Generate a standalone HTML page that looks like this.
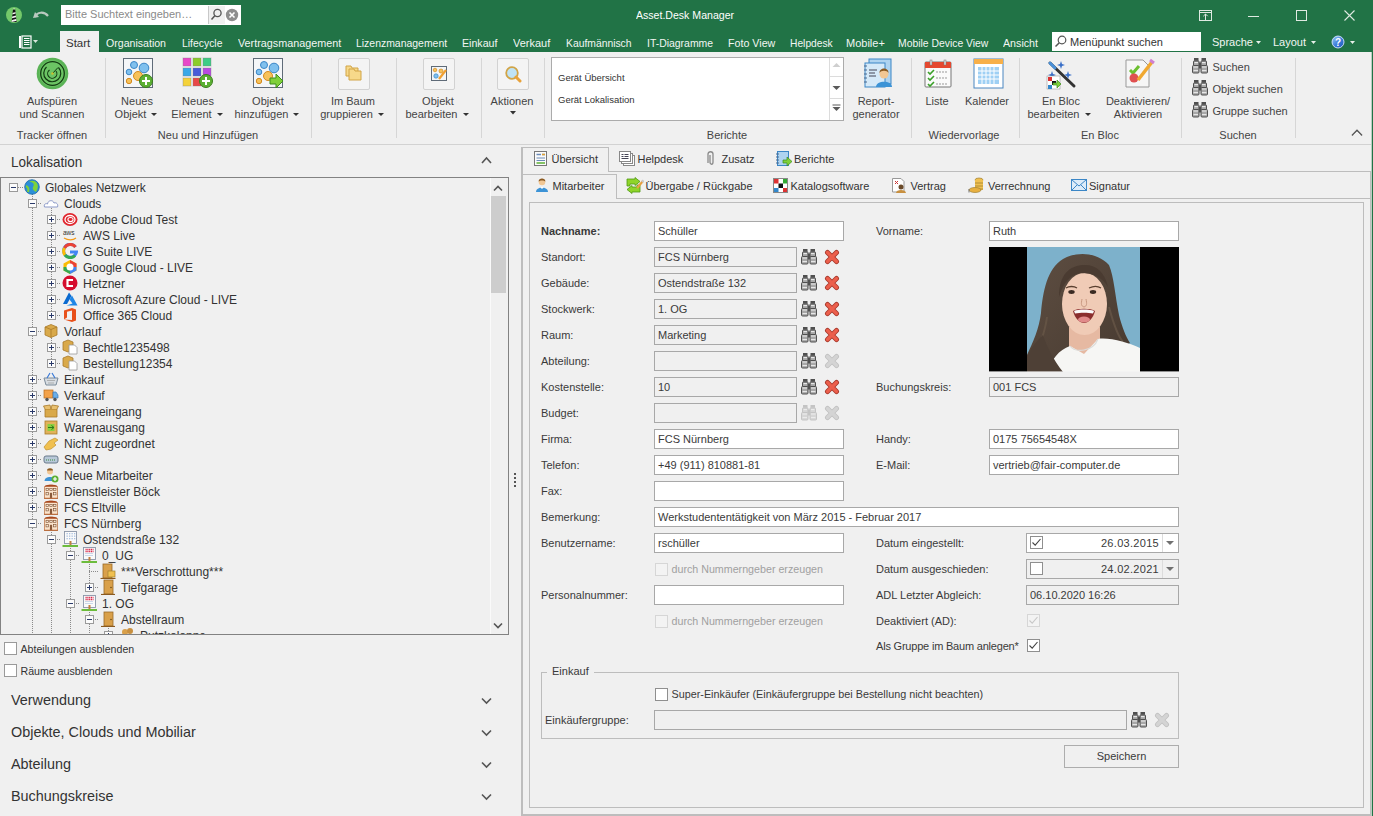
<!DOCTYPE html><html><head><meta charset="utf-8"><style>
html,body{margin:0;padding:0}
body{width:1373px;height:816px;position:relative;overflow:hidden;background:#f0f0f0;font-family:"Liberation Sans",sans-serif}
.a{position:absolute}
.t{position:absolute;white-space:nowrap}
</style></head><body>
<div class="a" style="left:0px;top:0px;width:1373px;height:52px;background:#217346"></div><svg class="a" style="left:5px;top:6px;" width="18" height="18" viewBox="0 0 18 18"><defs><clipPath id="lh"><path d="M8 3.2 L10.2 3.2 L11.6 16 L6.6 16 Z"/></clipPath></defs><circle cx="9" cy="9" r="8" fill="#74c96a"/><g clip-path="url(#lh)"><rect x="5" y="2" width="8" height="15" fill="#111"/><path d="M5 7.5 L13 5.5 L13 7 L5 9Z M5 11 L13 9 L13 10.8 L5 12.8Z M5 14.6 L13 12.6 L13 14.4 L5 16.4Z" fill="#f4f4f4"/></g><path d="M8.3 2 L9.9 2 L10.2 3.5 L8 3.5Z" fill="#a8d8a0"/></svg><svg class="a" style="left:32px;top:9px;" width="18" height="12" viewBox="0 0 18 12"><path d="M3 8 C5 3, 12 2, 16 7" stroke="#b9c9bf" stroke-width="2.2" fill="none"/><path d="M1 9 L3 3 L7 8 Z" fill="#b9c9bf"/></svg><div class="a" style="left:61px;top:5px;width:180px;height:20px;background:#fff"></div><div class="a" style="left:208px;top:6px;width:16px;height:18px;background:#f0f0f0;border-left:1px solid #c8c8c8"></div><div class="t" style="left:65px;top:9px;font-size:11px;line-height:11px;color:#8a8a8a;font-weight:400;">Bitte Suchtext eingeben…</div><svg class="a" style="left:210px;top:8px;" width="12" height="14" viewBox="0 0 12 14"><circle cx="7.5" cy="5" r="3.6" stroke="#555" stroke-width="1.3" fill="none"/><path d="M5 7.6 L1.5 11.5" stroke="#555" stroke-width="1.5"/></svg><svg class="a" style="left:225px;top:8px;" width="14" height="14" viewBox="0 0 14 14"><circle cx="7" cy="7" r="6.2" fill="#8e8e8e"/><path d="M4.5 4.5 L9.5 9.5 M9.5 4.5 L4.5 9.5" stroke="#fff" stroke-width="1.6"/></svg><div class="t" style="left:636px;top:10px;font-size:11px;line-height:11px;color:#ffffff;font-weight:400;transform:scaleX(0.96);transform-origin:0 0">Asset.Desk Manager</div><svg class="a" style="left:1198px;top:9px;" width="16" height="13" viewBox="0 0 16 13"><rect x="1.5" y="1.5" width="12" height="10" fill="none" stroke="#dfeae2" stroke-width="1"/><path d="M1.5 3.5 H13.5 M7.5 5 V11.5 M5.3 7.2 L7.5 5 L9.7 7.2" stroke="#dfeae2" stroke-width="1" fill="none"/></svg><div class="a" style="left:1248px;top:16px;width:11px;height:1px;background:#dfeae2"></div><div class="a" style="left:1296px;top:10px;width:11px;height:11px;border:1px solid #dfeae2;box-sizing:border-box"></div><svg class="a" style="left:1343px;top:9px;" width="13" height="13" viewBox="0 0 13 13"><path d="M1.5 1.5 L11.5 11.5 M11.5 1.5 L1.5 11.5" stroke="#dfeae2" stroke-width="1.1"/></svg><svg class="a" style="left:18px;top:35px;" width="14" height="14" viewBox="0 0 14 14"><rect x="1" y="1" width="2" height="12" fill="#fff"/><rect x="4" y="1" width="9" height="12" fill="none" stroke="#fff" stroke-width="1.2"/><path d="M6 3.5 H11.5 M6 5.5 H11.5 M6 7.5 H11.5 M6 9.5 H11.5" stroke="#fff" stroke-width="1"/></svg><svg class="a" style="left:33px;top:40px;" width="5" height="3" viewBox="0 0 5 3"><path d="M0 0 L5 0 L2.5 3Z" fill="#d8e6dc"/></svg><div class="a" style="left:60px;top:31px;width:39px;height:21px;background:#f0f0f0"></div><div class="t" style="left:66px;top:38px;font-size:11.5px;line-height:11.5px;color:#333;font-weight:400;">Start</div><div class="t" style="left:106px;top:38px;font-size:11px;line-height:11px;color:#f2f6f3;font-weight:400;transform:scaleX(0.962);transform-origin:0 0">Organisation</div><div class="t" style="left:181.5px;top:38px;font-size:11px;line-height:11px;color:#f2f6f3;font-weight:400;transform:scaleX(0.944);transform-origin:0 0">Lifecycle</div><div class="t" style="left:237.5px;top:38px;font-size:11px;line-height:11px;color:#f2f6f3;font-weight:400;transform:scaleX(0.981);transform-origin:0 0">Vertragsmanagement</div><div class="t" style="left:355.5px;top:38px;font-size:11px;line-height:11px;color:#f2f6f3;font-weight:400;transform:scaleX(0.949);transform-origin:0 0">Lizenzmanagement</div><div class="t" style="left:461.5px;top:38px;font-size:11px;line-height:11px;color:#f2f6f3;font-weight:400;transform:scaleX(0.965);transform-origin:0 0">Einkauf</div><div class="t" style="left:512.5px;top:38px;font-size:11px;line-height:11px;color:#f2f6f3;font-weight:400;transform:scaleX(0.997);transform-origin:0 0">Verkauf</div><div class="t" style="left:565.5px;top:38px;font-size:11px;line-height:11px;color:#f2f6f3;font-weight:400;transform:scaleX(0.940);transform-origin:0 0">Kaufmännisch</div><div class="t" style="left:646.5px;top:38px;font-size:11px;line-height:11px;color:#f2f6f3;font-weight:400;transform:scaleX(0.948);transform-origin:0 0">IT-Diagramme</div><div class="t" style="left:728px;top:38px;font-size:11px;line-height:11px;color:#f2f6f3;font-weight:400;transform:scaleX(0.971);transform-origin:0 0">Foto View</div><div class="t" style="left:789.5px;top:38px;font-size:11px;line-height:11px;color:#f2f6f3;font-weight:400;transform:scaleX(0.932);transform-origin:0 0">Helpdesk</div><div class="t" style="left:846px;top:38px;font-size:11px;line-height:11px;color:#f2f6f3;font-weight:400;transform:scaleX(1.000);transform-origin:0 0">Mobile+</div><div class="t" style="left:898px;top:38px;font-size:11px;line-height:11px;color:#f2f6f3;font-weight:400;transform:scaleX(0.943);transform-origin:0 0">Mobile Device View</div><div class="t" style="left:1003px;top:38px;font-size:11px;line-height:11px;color:#f2f6f3;font-weight:400;transform:scaleX(0.970);transform-origin:0 0">Ansicht</div><div class="a" style="left:1052px;top:32px;width:149px;height:19px;background:#fff"></div><svg class="a" style="left:1054px;top:35px;" width="13" height="13" viewBox="0 0 13 13"><circle cx="8" cy="5" r="3.8" stroke="#555" stroke-width="1.2" fill="none"/><path d="M5.3 7.7 L1.5 11.5" stroke="#555" stroke-width="1.5"/></svg><div class="t" style="left:1070px;top:37px;font-size:11px;line-height:11px;color:#333;font-weight:400;">Menüpunkt suchen</div><div class="t" style="left:1212px;top:37px;font-size:11px;line-height:11px;color:#f2f6f3;font-weight:400;">Sprache</div><svg class="a" style="left:1256px;top:41px;" width="5" height="3" viewBox="0 0 5 3"><path d="M0 0 L5 0 L2.5 3Z" fill="#e8f0ea"/></svg><div class="t" style="left:1273px;top:37px;font-size:11px;line-height:11px;color:#f2f6f3;font-weight:400;">Layout</div><svg class="a" style="left:1311px;top:41px;" width="5" height="3" viewBox="0 0 5 3"><path d="M0 0 L5 0 L2.5 3Z" fill="#e8f0ea"/></svg><svg class="a" style="left:1330px;top:34px;" width="16" height="16" viewBox="0 0 16 16"><defs><linearGradient id="hq" x1="0" y1="0" x2="1" y2="1"><stop offset="0" stop-color="#9fd0f8"/><stop offset=".55" stop-color="#3a7ad8"/><stop offset="1" stop-color="#1f55b8"/></linearGradient></defs><circle cx="8" cy="8" r="6.6" fill="#0d4a50" opacity=".5"/><circle cx="8" cy="8" r="6" fill="url(#hq)" stroke="#d8ecff" stroke-width=".9"/><text x="8" y="11.8" font-family="Liberation Sans" font-weight="700" font-size="10" fill="#fff" text-anchor="middle">?</text></svg><svg class="a" style="left:1350px;top:41px;" width="5" height="3" viewBox="0 0 5 3"><path d="M0 0 L5 0 L2.5 3Z" fill="#e8f0ea"/></svg><div class="a" style="left:0px;top:52px;width:1373px;height:92px;background:#f0f0f0"></div><div class="a" style="left:0px;top:144px;width:1371px;height:1px;background:#d2d2d2"></div><div class="a" style="left:1371px;top:52px;width:1px;height:764px;background:#b9cfc1"></div><div class="a" style="left:1372px;top:52px;width:1px;height:764px;background:#217346"></div><div class="a" style="left:105px;top:58px;width:1px;height:80px;background:#d6d6d6"></div><div class="a" style="left:311px;top:58px;width:1px;height:80px;background:#d6d6d6"></div><div class="a" style="left:396px;top:58px;width:1px;height:80px;background:#d6d6d6"></div><div class="a" style="left:481px;top:58px;width:1px;height:80px;background:#d6d6d6"></div><div class="a" style="left:544px;top:58px;width:1px;height:80px;background:#d6d6d6"></div><div class="a" style="left:911px;top:58px;width:1px;height:80px;background:#d6d6d6"></div><div class="a" style="left:1019px;top:58px;width:1px;height:80px;background:#d6d6d6"></div><div class="a" style="left:1181px;top:58px;width:1px;height:80px;background:#d6d6d6"></div><div class="a" style="left:1295px;top:58px;width:1px;height:80px;background:#d6d6d6"></div><div class="t" style="left:-48px;width:200px;text-align:center;top:130px;font-size:11px;line-height:11px;color:#444">Tracker öffnen</div><div class="t" style="left:108px;width:200px;text-align:center;top:130px;font-size:11px;line-height:11px;color:#444">Neu und Hinzufügen</div><div class="t" style="left:627px;width:200px;text-align:center;top:130px;font-size:11px;line-height:11px;color:#444">Berichte</div><div class="t" style="left:864px;width:200px;text-align:center;top:130px;font-size:11px;line-height:11px;color:#444">Wiedervorlage</div><div class="t" style="left:1000px;width:200px;text-align:center;top:130px;font-size:11px;line-height:11px;color:#444">En Bloc</div><div class="t" style="left:1138px;width:200px;text-align:center;top:130px;font-size:11px;line-height:11px;color:#444">Suchen</div><svg class="a" style="left:36px;top:57px;" width="33" height="33" viewBox="0 0 33 33"><circle cx="16.5" cy="16.5" r="15.8" fill="#5ab356"/><circle cx="16.5" cy="16.5" r="13.2" fill="#6cc464"/><circle cx="16.5" cy="16.5" r="11.8" fill="none" stroke="#123a12" stroke-width="1.3"/><path d="M10.5 10 A8.5 8.5 0 1 0 22.5 10.5" fill="none" stroke="#123a12" stroke-width="1.2"/><path d="M13.5 13 A4.6 4.6 0 1 0 20 14" fill="none" stroke="#123a12" stroke-width="1.1"/><path d="M16.5 16.5 L22 10.5" stroke="#123a12" stroke-width="1"/><circle cx="16.5" cy="16.5" r="1.3" fill="#c8c030"/></svg><div class="t" style="left:-48px;width:200px;text-align:center;top:96px;font-size:11px;line-height:11px;color:#444">Aufspüren</div><div class="t" style="left:-48px;width:200px;text-align:center;top:109px;font-size:11px;line-height:11px;color:#444">und Scannen</div><svg class="a" style="left:123px;top:58px;" width="30" height="31" viewBox="0 0 30 31"><rect x="0.5" y="0.5" width="29" height="29" fill="#f4f6f8" stroke="#5f6b78"/><circle cx="11" cy="7" r="3.5" fill="#7fc0ee" stroke="#3b86c6"/><circle cx="21" cy="10" r="4.8" fill="#7fc0ee" stroke="#3b86c6"/><circle cx="6" cy="14" r="2.8" fill="#7fc0ee" stroke="#3b86c6"/><circle cx="15" cy="18" r="4.5" fill="#f7c25a" stroke="#d48a1e"/><circle cx="6" cy="23" r="2.7" fill="#f7c25a" stroke="#d48a1e"/><circle cx="23" cy="23" r="6.5" fill="#5cb033" stroke="#3a7d1d"/><path d="M23 19 V27 M19 23 H27" stroke="#fff" stroke-width="2"/></svg><div class="t" style="left:37px;width:200px;text-align:center;top:96px;font-size:11px;line-height:11px;color:#444">Neues</div><div class="t" style="left:36px;width:200px;text-align:center;top:109px;font-size:11px;line-height:11px;color:#444">Objekt<span style='display:inline-block;width:0;height:0;border-left:3px solid transparent;border-right:3px solid transparent;border-top:3px solid #333;margin-left:5px;vertical-align:2px'></span></div><svg class="a" style="left:182px;top:57px;" width="32" height="32" viewBox="0 0 32 32"><rect x="1" y="1" width="8" height="8" fill="#e848c8" stroke="#777" stroke-opacity="0.35"/><rect x="11" y="1" width="8" height="8" fill="#8ccc2a" stroke="#777" stroke-opacity="0.35"/><rect x="21" y="1" width="8" height="8" fill="#3ecc86" stroke="#777" stroke-opacity="0.35"/><rect x="1" y="11" width="8" height="8" fill="#3aa8e8" stroke="#777" stroke-opacity="0.35"/><rect x="11" y="11" width="8" height="8" fill="#4a5ad8" stroke="#777" stroke-opacity="0.35"/><rect x="21" y="11" width="8" height="8" fill="#b84ae0" stroke="#777" stroke-opacity="0.35"/><rect x="1" y="21" width="8" height="8" fill="#f4d23a" stroke="#777" stroke-opacity="0.35"/><rect x="11" y="21" width="8" height="8" fill="#e84848" stroke="#777" stroke-opacity="0.35"/><circle cx="24" cy="24" r="6.5" fill="#5cb033" stroke="#3a7d1d"/><path d="M24 20 V28 M20 24 H28" stroke="#fff" stroke-width="2"/></svg><div class="t" style="left:98px;width:200px;text-align:center;top:96px;font-size:11px;line-height:11px;color:#444">Neues</div><div class="t" style="left:97px;width:200px;text-align:center;top:109px;font-size:11px;line-height:11px;color:#444">Element<span style='display:inline-block;width:0;height:0;border-left:3px solid transparent;border-right:3px solid transparent;border-top:3px solid #333;margin-left:5px;vertical-align:2px'></span></div><svg class="a" style="left:253px;top:58px;" width="31" height="31" viewBox="0 0 31 31"><rect x="0.5" y="0.5" width="29" height="29" fill="#f4f6f8" stroke="#5f6b78"/><circle cx="11" cy="7" r="3.5" fill="#7fc0ee" stroke="#3b86c6"/><circle cx="21" cy="10" r="4.8" fill="#7fc0ee" stroke="#3b86c6"/><circle cx="6" cy="14" r="2.8" fill="#7fc0ee" stroke="#3b86c6"/><circle cx="15" cy="18" r="4.5" fill="#f7c25a" stroke="#d48a1e"/><circle cx="6" cy="23" r="2.7" fill="#f7c25a" stroke="#d48a1e"/><path d="M17 20 H23 V16 L30 23 L23 30 V26 H17Z" fill="#7fd03a" stroke="#3e8c1c"/></svg><div class="t" style="left:168px;width:200px;text-align:center;top:96px;font-size:11px;line-height:11px;color:#444">Objekt</div><div class="t" style="left:167px;width:200px;text-align:center;top:109px;font-size:11px;line-height:11px;color:#444">hinzufügen<span style='display:inline-block;width:0;height:0;border-left:3px solid transparent;border-right:3px solid transparent;border-top:3px solid #333;margin-left:5px;vertical-align:2px'></span></div><div class="a" style="left:338px;top:58px;width:32px;height:32px;background:#f4f4f4;border:1px solid #d2d2d2;border-radius:2px;box-sizing:border-box"></div><svg class="a" style="left:345px;top:65px;" width="18" height="17" viewBox="0 0 18 17"><path d="M1 1 H6 L7 3 H13 V11 H1Z" fill="#f7d98a" stroke="#d1a447"/><path d="M4 4 H9 L10 6 H16 V15 H4Z" fill="#f7d98a" stroke="#d1a447"/></svg><div class="t" style="left:253px;width:200px;text-align:center;top:96px;font-size:11px;line-height:11px;color:#444">Im Baum</div><div class="t" style="left:252px;width:200px;text-align:center;top:109px;font-size:11px;line-height:11px;color:#444">gruppieren<span style='display:inline-block;width:0;height:0;border-left:3px solid transparent;border-right:3px solid transparent;border-top:3px solid #333;margin-left:5px;vertical-align:2px'></span></div><div class="a" style="left:423px;top:58px;width:32px;height:32px;background:#f4f4f4;border:1px solid #d2d2d2;border-radius:2px;box-sizing:border-box"></div><svg class="a" style="left:430px;top:65px;" width="18" height="17" viewBox="0 0 18 17"><rect x="1.5" y="1.5" width="15" height="14" fill="#f3f6f8" stroke="#5f6b78"/><circle cx="5" cy="5" r="1.8" fill="#f7c25a" stroke="#d48a1e" stroke-width=".7"/><circle cx="11" cy="6" r="2" fill="#f7c25a" stroke="#d48a1e" stroke-width=".7"/><circle cx="6" cy="11" r="2.2" fill="#7fc0ee" stroke="#3b86c6" stroke-width=".7"/><path d="M9 14 L16 5" stroke="#f0a030" stroke-width="2.2"/></svg><div class="t" style="left:338px;width:200px;text-align:center;top:96px;font-size:11px;line-height:11px;color:#444">Objekt</div><div class="t" style="left:337px;width:200px;text-align:center;top:109px;font-size:11px;line-height:11px;color:#444">bearbeiten<span style='display:inline-block;width:0;height:0;border-left:3px solid transparent;border-right:3px solid transparent;border-top:3px solid #333;margin-left:5px;vertical-align:2px'></span></div><div class="a" style="left:497px;top:58px;width:32px;height:32px;background:#f4f4f4;border:1px solid #d2d2d2;border-radius:2px;box-sizing:border-box"></div><svg class="a" style="left:504px;top:65px;" width="18" height="18" viewBox="0 0 18 18"><circle cx="8" cy="8" r="5.8" fill="#bfe3f5" stroke="#d1a447" stroke-width="1.8"/><path d="M12 12 L16 16" stroke="#e8a23a" stroke-width="3" stroke-linecap="round"/></svg><div class="t" style="left:412px;width:200px;text-align:center;top:96px;font-size:11px;line-height:11px;color:#444">Aktionen</div><svg class="a" style="left:510px;top:111px;" width="6" height="4" viewBox="0 0 6 4"><path d="M0 0 L6 0 L3 3.5Z" fill="#333"/></svg><div class="a" style="left:551px;top:57px;width:293px;height:64px;background:#fff;border:1px solid #ababab;box-sizing:border-box"></div><div class="a" style="left:829px;top:58px;width:1px;height:62px;background:#dcdcdc"></div><div class="a" style="left:830px;top:76px;width:13px;height:1px;background:#dcdcdc"></div><div class="a" style="left:830px;top:98px;width:13px;height:1px;background:#dcdcdc"></div><svg class="a" style="left:832px;top:62px;" width="9" height="6" viewBox="0 0 9 6"><path d="M0.5 5 L4.5 1 L8.5 5Z" fill="#cfcfcf"/></svg><svg class="a" style="left:832px;top:85px;" width="9" height="6" viewBox="0 0 9 6"><path d="M0.5 1 L8.5 1 L4.5 5Z" fill="#5a5a5a"/></svg><svg class="a" style="left:832px;top:104px;" width="9" height="8" viewBox="0 0 9 8"><path d="M0.5 1 H8.5" stroke="#5a5a5a"/><path d="M0.5 3 L8.5 3 L4.5 7Z" fill="#5a5a5a"/></svg><div class="t" style="left:558px;top:73px;font-size:9.5px;line-height:9.5px;color:#333;font-weight:400;">Gerät Übersicht</div><div class="t" style="left:558px;top:95px;font-size:9.5px;line-height:9.5px;color:#333;font-weight:400;">Gerät Lokalisation</div><svg class="a" style="left:863px;top:58px;" width="30" height="31" viewBox="0 0 30 31"><rect x="6" y="1" width="22" height="25" fill="#aed3f0" stroke="#3b86c6"/><rect x="2" y="5" width="20" height="24" fill="#d5e9f8" stroke="#3b86c6"/><path d="M1 8 h3 M1 12 h3 M1 16 h3 M1 20 h3 M1 24 h3" stroke="#4a6a90" stroke-width="1.2"/><path d="M6 12 h8 M6 15 h6 M6 18 h7" stroke="#445" stroke-width="1"/><circle cx="21" cy="16" r="4.5" fill="#f2c794"/><path d="M16.5 15 C16 9, 26 9, 25.5 15 C24 12, 18 12, 16.5 15Z" fill="#8a5a22"/><path d="M13 29 C13 22, 29 22, 29 29Z" fill="#3c93d6"/></svg><div class="t" style="left:776px;width:200px;text-align:center;top:96px;font-size:11px;line-height:11px;color:#444">Report-</div><div class="t" style="left:776px;width:200px;text-align:center;top:109px;font-size:11px;line-height:11px;color:#444">generator</div><svg class="a" style="left:924px;top:59px;" width="28" height="30" viewBox="0 0 28 30"><rect x="1" y="3" width="26" height="25" rx="1" fill="#fafafa" stroke="#777"/><rect x="1" y="3" width="26" height="6" fill="#e5482f"/><rect x="6" y="1" width="2" height="5" fill="#ddd" stroke="#777" stroke-width=".5"/><rect x="20" y="1" width="2" height="5" fill="#ddd" stroke="#777" stroke-width=".5"/><path d="M4 13 L6 15 L10 11 M4 19 L6 21 L10 17 M4 25 L6 27 L10 23" stroke="#3aa028" stroke-width="1.6" fill="none"/><path d="M12 13 h11 M12 19 h11 M12 25 h11" stroke="#999" stroke-dasharray="2 1"/></svg><div class="t" style="left:837px;width:200px;text-align:center;top:96px;font-size:11px;line-height:11px;color:#444">Liste</div><svg class="a" style="left:973px;top:58px;" width="31" height="31" viewBox="0 0 31 31"><rect x="1" y="1" width="29" height="29" fill="#fff" stroke="#4a86c0"/><rect x="1" y="1" width="29" height="5" fill="#f7b04a"/><rect x="5" y="9" width="21" height="17" fill="#9fd0f4"/><path d="M5 13 h21 M5 17 h21 M5 21 h21 M9 9 v17 M13 9 v17 M17 9 v17 M21 9 v17" stroke="#fff" stroke-width="1"/></svg><div class="t" style="left:887px;width:200px;text-align:center;top:96px;font-size:11px;line-height:11px;color:#444">Kalender</div><svg class="a" style="left:1046px;top:59px;" width="32" height="31" viewBox="0 0 32 31"><path d="M4 4 L28 27" stroke="#333" stroke-width="3" stroke-linecap="round"/><path d="M4 4 L9 9" stroke="#4a90d8" stroke-width="3" stroke-linecap="round"/><path d="M15 2 l1 3 3 1 -3 1 -1 3 -1 -3 -3 -1 3 -1z M22 12 l1 3 3 1 -3 1 -1 3 -1 -3 -3 -1 3 -1z M6 12 l1 3 3 1 -3 1 -1 3 -1 -3 -3 -1 3 -1z" fill="#3a70c8"/><rect x="1" y="17" width="13" height="13" fill="#fff" stroke="#888" stroke-width=".5"/><rect x="2" y="18" width="4" height="4" fill="#d33"/><rect x="6" y="22" width="4" height="4" fill="#111"/><rect x="2" y="26" width="4" height="4" fill="#38c"/><path d="M7 24 h4 v-3 l4 4 -4 4 v-3 h-4z" fill="#7fd03a" stroke="#3e8c1c" stroke-width=".7"/></svg><div class="t" style="left:961px;width:200px;text-align:center;top:96px;font-size:11px;line-height:11px;color:#444">En Bloc</div><div class="t" style="left:959px;width:200px;text-align:center;top:109px;font-size:11px;line-height:11px;color:#444">bearbeiten<span style='display:inline-block;width:0;height:0;border-left:3px solid transparent;border-right:3px solid transparent;border-top:3px solid #333;margin-left:5px;vertical-align:2px'></span></div><svg class="a" style="left:1124px;top:58px;" width="31" height="31" viewBox="0 0 31 31"><path d="M2 2 H19 L25 8 V29 H2Z" fill="#f6f6f6" stroke="#999"/><path d="M6 12 L9 15 L15 8" stroke="#6cc030" stroke-width="3" fill="none"/><circle cx="10" cy="20" r="4.5" fill="#e05050"/><path d="M14 22 L28 4" stroke="#f0a830" stroke-width="3.5"/><path d="M26 2 L30 5" stroke="#d080d0" stroke-width="3"/></svg><div class="t" style="left:1038px;width:200px;text-align:center;top:96px;font-size:11px;line-height:11px;color:#444">Deaktivieren/</div><div class="t" style="left:1038px;width:200px;text-align:center;top:109px;font-size:11px;line-height:11px;color:#444">Aktivieren</div><svg class="a" style="left:1192px;top:58px;" width="16" height="16" viewBox="0 0 16 16"><rect x="7" y="4.5" width="2" height="6" fill="#505050"/><rect x="0.5" y="7.5" width="6.5" height="7.5" rx="1" fill="#a8a8a8" stroke="#505050"/><rect x="1.5" y="3" width="5.5" height="4.5" rx=".5" fill="#a8a8a8" stroke="#505050"/><rect x="2" y="0" width="4.5" height="2.8" fill="#505050"/><rect x="9" y="7.5" width="6.5" height="7.5" rx="1" fill="#a8a8a8" stroke="#505050"/><rect x="9" y="3" width="5.5" height="4.5" rx=".5" fill="#a8a8a8" stroke="#505050"/><rect x="9.5" y="0" width="4.5" height="2.8" fill="#505050"/><path d="M2.5 4.6 H6 M10 4.6 H13.5 M1.5 9 H6 M10 9 H14.5 M1.5 12.6 H6 M10 12.6 H14.5" stroke="#eeeeee" stroke-width="1"/></svg><div class="t" style="left:1212.5px;top:62px;font-size:11px;line-height:11px;color:#444;font-weight:400;">Suchen</div><svg class="a" style="left:1192px;top:80px;" width="16" height="16" viewBox="0 0 16 16"><rect x="7" y="4.5" width="2" height="6" fill="#505050"/><rect x="0.5" y="7.5" width="6.5" height="7.5" rx="1" fill="#a8a8a8" stroke="#505050"/><rect x="1.5" y="3" width="5.5" height="4.5" rx=".5" fill="#a8a8a8" stroke="#505050"/><rect x="2" y="0" width="4.5" height="2.8" fill="#505050"/><rect x="9" y="7.5" width="6.5" height="7.5" rx="1" fill="#a8a8a8" stroke="#505050"/><rect x="9" y="3" width="5.5" height="4.5" rx=".5" fill="#a8a8a8" stroke="#505050"/><rect x="9.5" y="0" width="4.5" height="2.8" fill="#505050"/><path d="M2.5 4.6 H6 M10 4.6 H13.5 M1.5 9 H6 M10 9 H14.5 M1.5 12.6 H6 M10 12.6 H14.5" stroke="#eeeeee" stroke-width="1"/></svg><div class="t" style="left:1212.5px;top:84px;font-size:11px;line-height:11px;color:#444;font-weight:400;">Objekt suchen</div><svg class="a" style="left:1192px;top:102px;" width="16" height="16" viewBox="0 0 16 16"><rect x="7" y="4.5" width="2" height="6" fill="#505050"/><rect x="0.5" y="7.5" width="6.5" height="7.5" rx="1" fill="#a8a8a8" stroke="#505050"/><rect x="1.5" y="3" width="5.5" height="4.5" rx=".5" fill="#a8a8a8" stroke="#505050"/><rect x="2" y="0" width="4.5" height="2.8" fill="#505050"/><rect x="9" y="7.5" width="6.5" height="7.5" rx="1" fill="#a8a8a8" stroke="#505050"/><rect x="9" y="3" width="5.5" height="4.5" rx=".5" fill="#a8a8a8" stroke="#505050"/><rect x="9.5" y="0" width="4.5" height="2.8" fill="#505050"/><path d="M2.5 4.6 H6 M10 4.6 H13.5 M1.5 9 H6 M10 9 H14.5 M1.5 12.6 H6 M10 12.6 H14.5" stroke="#eeeeee" stroke-width="1"/></svg><div class="t" style="left:1212.5px;top:106px;font-size:11px;line-height:11px;color:#444;font-weight:400;">Gruppe suchen</div><svg class="a" style="left:1351px;top:128px;" width="12" height="9" viewBox="0 0 12 9"><path d="M1 7.5 L6 2.5 L11 7.5" stroke="#555" stroke-width="1.6" fill="none"/><path d="M2.3 7.5 L6 3.8 L9.7 7.5" stroke="#fff" stroke-width=".8" fill="none"/></svg><div class="t" style="left:11px;top:154px;font-size:15px;line-height:15px;color:#333;font-weight:400;transform:scaleX(0.9);transform-origin:0 0">Lokalisation</div><svg class="a" style="left:481px;top:156px;" width="11" height="8" viewBox="0 0 11 8"><path d="M1 7 L5.5 2 L10 7" stroke="#555" stroke-width="1.6" fill="none"/></svg><div class="a" style="left:0px;top:177px;width:509px;height:458px;background:#f0f0f0;border:1px solid #828282;border-right:1px solid #828282;box-sizing:border-box"></div><div class="a" style="left:490px;top:178px;width:18px;height:456px;background:#f0f0f0;border-left:1px solid #fafafa;box-sizing:border-box"></div><div class="a" style="left:491px;top:196px;width:15px;height:97px;background:#cdcdcd"></div><svg class="a" style="left:493px;top:184px;" width="10" height="8" viewBox="0 0 10 8"><path d="M1 6.5 L5 2.5 L9 6.5" stroke="#555" stroke-width="1.6" fill="none"/></svg><svg class="a" style="left:493px;top:622px;" width="10" height="8" viewBox="0 0 10 8"><path d="M1 1.5 L5 5.5 L9 1.5" stroke="#555" stroke-width="1.6" fill="none"/></svg><div class="t" style="left:20.5px;top:644px;font-size:10.6px;line-height:10.6px;color:#333;font-weight:400;">Abteilungen ausblenden</div><div class="t" style="left:20.5px;top:666px;font-size:10.6px;line-height:10.6px;color:#333;font-weight:400;">Räume ausblenden</div><div class="a" style="left:4px;top:642px;width:13px;height:13px;background:#fff;border:1px solid #9a9a9a;box-sizing:border-box"></div><div class="a" style="left:4px;top:664px;width:13px;height:13px;background:#fff;border:1px solid #9a9a9a;box-sizing:border-box"></div><div class="t" style="left:11px;top:693px;font-size:14.4px;line-height:14.4px;color:#333;font-weight:400;">Verwendung</div><svg class="a" style="left:481px;top:697px;" width="11" height="8" viewBox="0 0 11 8"><path d="M1 1.5 L5.5 6 L10 1.5" stroke="#555" stroke-width="1.6" fill="none"/></svg><div class="t" style="left:11px;top:725px;font-size:14.4px;line-height:14.4px;color:#333;font-weight:400;">Objekte, Clouds und Mobiliar</div><svg class="a" style="left:481px;top:729px;" width="11" height="8" viewBox="0 0 11 8"><path d="M1 1.5 L5.5 6 L10 1.5" stroke="#555" stroke-width="1.6" fill="none"/></svg><div class="t" style="left:11px;top:757px;font-size:14.4px;line-height:14.4px;color:#333;font-weight:400;">Abteilung</div><svg class="a" style="left:481px;top:761px;" width="11" height="8" viewBox="0 0 11 8"><path d="M1 1.5 L5.5 6 L10 1.5" stroke="#555" stroke-width="1.6" fill="none"/></svg><div class="t" style="left:11px;top:789px;font-size:14.4px;line-height:14.4px;color:#333;font-weight:400;">Buchungskreise</div><svg class="a" style="left:481px;top:793px;" width="11" height="8" viewBox="0 0 11 8"><path d="M1 1.5 L5.5 6 L10 1.5" stroke="#555" stroke-width="1.6" fill="none"/></svg><div class="a" style="left:514px;top:473px;width:2px;height:2px;background:#555"></div><div class="a" style="left:514px;top:477px;width:2px;height:2px;background:#555"></div><div class="a" style="left:514px;top:481px;width:2px;height:2px;background:#555"></div><div class="a" style="left:514px;top:485px;width:2px;height:2px;background:#555"></div><div class="a" style="left:1px;top:178px;width:489px;height:456px;overflow:hidden"><div class="a" style="left:31px;top:14px;width:1px;height:456px;background-image:linear-gradient(180deg,#8a8a8a 50%,transparent 50%);background-size:1px 2px"></div><div class="a" style="left:50px;top:30px;width:1px;height:107px;background-image:linear-gradient(180deg,#8a8a8a 50%,transparent 50%);background-size:1px 2px"></div><div class="a" style="left:50px;top:158px;width:1px;height:27px;background-image:linear-gradient(180deg,#8a8a8a 50%,transparent 50%);background-size:1px 2px"></div><div class="a" style="left:50px;top:350px;width:1px;height:120px;background-image:linear-gradient(180deg,#8a8a8a 50%,transparent 50%);background-size:1px 2px"></div><div class="a" style="left:69px;top:366px;width:1px;height:104px;background-image:linear-gradient(180deg,#8a8a8a 50%,transparent 50%);background-size:1px 2px"></div><div class="a" style="left:88px;top:382px;width:1px;height:27px;background-image:linear-gradient(180deg,#8a8a8a 50%,transparent 50%);background-size:1px 2px"></div><div class="a" style="left:88px;top:430px;width:1px;height:40px;background-image:linear-gradient(180deg,#8a8a8a 50%,transparent 50%);background-size:1px 2px"></div><div class="a" style="left:107px;top:446px;width:1px;height:24px;background-image:linear-gradient(180deg,#8a8a8a 50%,transparent 50%);background-size:1px 2px"></div><div class="a" style="left:17px;top:9px;width:5px;height:1px;background-image:linear-gradient(90deg,#8a8a8a 50%,transparent 50%);background-size:2px 1px"></div><svg class="a" style="left:8px;top:5px;" width="9" height="9" viewBox="0 0 9 9"><rect x="0.5" y="0.5" width="8" height="8" fill="#fbfbfb" stroke="#9a9a9a"/><path d="M2 4.5 H7" stroke="#2a3a6a"/></svg><svg class="a" style="left:23px;top:1px;" width="16" height="16" viewBox="0 0 16 16"><circle cx="8" cy="8" r="7.3" fill="#2b8fd8"/><path d="M5 2.5 C9 3, 11 5, 9 8 C8 10, 10 12, 12 13 C14 10, 15 6, 12 3 C10 1.5, 7 1.5, 5 2.5Z" fill="#7ed23a"/><path d="M2 7 C4 8, 5 10, 4 13" stroke="#7ed23a" stroke-width="2" fill="none"/><circle cx="8" cy="8" r="7.3" fill="none" stroke="#1a6aa8" stroke-width=".8"/></svg><div class="t" style="left:44px;top:4px;font-size:12px;line-height:12px;color:#333;font-weight:400;">Globales Netzwerk</div><div class="a" style="left:31px;top:25px;width:10px;height:1px;background-image:linear-gradient(90deg,#8a8a8a 50%,transparent 50%);background-size:2px 1px"></div><svg class="a" style="left:27px;top:21px;" width="9" height="9" viewBox="0 0 9 9"><rect x="0.5" y="0.5" width="8" height="8" fill="#fbfbfb" stroke="#9a9a9a"/><path d="M2 4.5 H7" stroke="#2a3a6a"/></svg><svg class="a" style="left:42px;top:17px;" width="16" height="16" viewBox="0 0 16 16"><path d="M1.5 12 C0.5 9, 3 8, 4.5 9 C5 5, 10 4.5, 11 8 C13.5 7, 15.5 9.5, 14.5 12 Z" fill="#fff" stroke="#8a98c8" stroke-width="1"/></svg><div class="t" style="left:63px;top:20px;font-size:12px;line-height:12px;color:#333;font-weight:400;">Clouds</div><div class="a" style="left:50px;top:41px;width:10px;height:1px;background-image:linear-gradient(90deg,#8a8a8a 50%,transparent 50%);background-size:2px 1px"></div><svg class="a" style="left:46px;top:37px;" width="9" height="9" viewBox="0 0 9 9"><rect x="0.5" y="0.5" width="8" height="8" fill="#fbfbfb" stroke="#9a9a9a"/><path d="M2 4.5 H7" stroke="#2a3a6a"/><path d="M4.5 2 V7" stroke="#2a3a6a"/></svg><svg class="a" style="left:61px;top:33px;" width="16" height="16" viewBox="0 0 16 16"><ellipse cx="8" cy="8.5" rx="7.5" ry="6.5" fill="#e0262e"/><ellipse cx="8" cy="8.5" rx="5" ry="4" fill="none" stroke="#fff" stroke-width="1.3"/><ellipse cx="8.5" cy="8.5" rx="2.6" ry="2" fill="none" stroke="#fff" stroke-width="1.1"/></svg><div class="t" style="left:82px;top:36px;font-size:12px;line-height:12px;color:#333;font-weight:400;">Adobe Cloud Test</div><div class="a" style="left:50px;top:57px;width:10px;height:1px;background-image:linear-gradient(90deg,#8a8a8a 50%,transparent 50%);background-size:2px 1px"></div><svg class="a" style="left:46px;top:53px;" width="9" height="9" viewBox="0 0 9 9"><rect x="0.5" y="0.5" width="8" height="8" fill="#fbfbfb" stroke="#9a9a9a"/><path d="M2 4.5 H7" stroke="#2a3a6a"/><path d="M4.5 2 V7" stroke="#2a3a6a"/></svg><svg class="a" style="left:61px;top:49px;" width="16" height="16" viewBox="0 0 16 16"><text x="1" y="8" font-family="Liberation Sans" font-size="6.5" fill="#333">aws</text><path d="M2 11 C6 13.5, 11 13.5, 14 11" stroke="#f29a1a" stroke-width="1.2" fill="none"/></svg><div class="t" style="left:82px;top:52px;font-size:12px;line-height:12px;color:#333;font-weight:400;">AWS Live</div><div class="a" style="left:50px;top:73px;width:10px;height:1px;background-image:linear-gradient(90deg,#8a8a8a 50%,transparent 50%);background-size:2px 1px"></div><svg class="a" style="left:46px;top:69px;" width="9" height="9" viewBox="0 0 9 9"><rect x="0.5" y="0.5" width="8" height="8" fill="#fbfbfb" stroke="#9a9a9a"/><path d="M2 4.5 H7" stroke="#2a3a6a"/><path d="M4.5 2 V7" stroke="#2a3a6a"/></svg><svg class="a" style="left:61px;top:65px;" width="16" height="16" viewBox="0 0 16 16"><path d="M13.5 4 A6.5 6.5 0 1 0 14.5 9 L8 9" stroke="#4285f4" stroke-width="3" fill="none"/><path d="M13.5 4 A6.5 6.5 0 0 0 2.5 5" stroke="#ea4335" stroke-width="3" fill="none"/><path d="M2.5 5 A6.5 6.5 0 0 0 3 12" stroke="#fbbc05" stroke-width="3" fill="none"/><path d="M3 12 A6.5 6.5 0 0 0 13 12.5" stroke="#34a853" stroke-width="3" fill="none"/></svg><div class="t" style="left:82px;top:68px;font-size:12px;line-height:12px;color:#333;font-weight:400;">G Suite LIVE</div><div class="a" style="left:50px;top:89px;width:10px;height:1px;background-image:linear-gradient(90deg,#8a8a8a 50%,transparent 50%);background-size:2px 1px"></div><svg class="a" style="left:46px;top:85px;" width="9" height="9" viewBox="0 0 9 9"><rect x="0.5" y="0.5" width="8" height="8" fill="#fbfbfb" stroke="#9a9a9a"/><path d="M2 4.5 H7" stroke="#2a3a6a"/><path d="M4.5 2 V7" stroke="#2a3a6a"/></svg><svg class="a" style="left:61px;top:81px;" width="16" height="16" viewBox="0 0 16 16"><path d="M8 1 L14.5 4.5 V11.5 L8 15 L1.5 11.5 V4.5Z" fill="#fbbc05"/><path d="M8 1 L14.5 4.5 V8 H8Z" fill="#ea4335"/><path d="M14.5 8 V11.5 L8 15 V8Z" fill="#4285f4"/><path d="M1.5 8 V11.5 L8 15 V8Z" fill="#34a853"/><circle cx="8" cy="8" r="3.5" fill="#fff"/></svg><div class="t" style="left:82px;top:84px;font-size:12px;line-height:12px;color:#333;font-weight:400;">Google Cloud - LIVE</div><div class="a" style="left:50px;top:105px;width:10px;height:1px;background-image:linear-gradient(90deg,#8a8a8a 50%,transparent 50%);background-size:2px 1px"></div><svg class="a" style="left:46px;top:101px;" width="9" height="9" viewBox="0 0 9 9"><rect x="0.5" y="0.5" width="8" height="8" fill="#fbfbfb" stroke="#9a9a9a"/><path d="M2 4.5 H7" stroke="#2a3a6a"/><path d="M4.5 2 V7" stroke="#2a3a6a"/></svg><svg class="a" style="left:61px;top:97px;" width="16" height="16" viewBox="0 0 16 16"><circle cx="8" cy="8" r="7.5" fill="#d50c2d"/><path d="M11 5 H5.5 V11 H11" stroke="#fff" stroke-width="2.2" fill="none"/></svg><div class="t" style="left:82px;top:100px;font-size:12px;line-height:12px;color:#333;font-weight:400;">Hetzner</div><div class="a" style="left:50px;top:121px;width:10px;height:1px;background-image:linear-gradient(90deg,#8a8a8a 50%,transparent 50%);background-size:2px 1px"></div><svg class="a" style="left:46px;top:117px;" width="9" height="9" viewBox="0 0 9 9"><rect x="0.5" y="0.5" width="8" height="8" fill="#fbfbfb" stroke="#9a9a9a"/><path d="M2 4.5 H7" stroke="#2a3a6a"/><path d="M4.5 2 V7" stroke="#2a3a6a"/></svg><svg class="a" style="left:61px;top:113px;" width="16" height="16" viewBox="0 0 16 16"><path d="M7 1.5 L1 13 H5 L9.5 5Z" fill="#0a6ad0"/><path d="M10 4.5 L15.5 14.5 H4.5 L10.5 12.5 L7.5 8.5Z" fill="#1f86e6"/></svg><div class="t" style="left:82px;top:116px;font-size:12px;line-height:12px;color:#333;font-weight:400;">Microsoft Azure Cloud - LIVE</div><div class="a" style="left:50px;top:137px;width:10px;height:1px;background-image:linear-gradient(90deg,#8a8a8a 50%,transparent 50%);background-size:2px 1px"></div><svg class="a" style="left:46px;top:133px;" width="9" height="9" viewBox="0 0 9 9"><rect x="0.5" y="0.5" width="8" height="8" fill="#fbfbfb" stroke="#9a9a9a"/><path d="M2 4.5 H7" stroke="#2a3a6a"/><path d="M4.5 2 V7" stroke="#2a3a6a"/></svg><svg class="a" style="left:61px;top:129px;" width="16" height="16" viewBox="0 0 16 16"><path d="M2 3.5 L10 1 L14 2.5 V13.5 L10 15 L2 12.5 L10 13 V3.5 L5 4.8 V10.5 L2 12.5Z" fill="#e8501a"/></svg><div class="t" style="left:82px;top:132px;font-size:12px;line-height:12px;color:#333;font-weight:400;">Office 365 Cloud</div><div class="a" style="left:31px;top:153px;width:10px;height:1px;background-image:linear-gradient(90deg,#8a8a8a 50%,transparent 50%);background-size:2px 1px"></div><svg class="a" style="left:27px;top:149px;" width="9" height="9" viewBox="0 0 9 9"><rect x="0.5" y="0.5" width="8" height="8" fill="#fbfbfb" stroke="#9a9a9a"/><path d="M2 4.5 H7" stroke="#2a3a6a"/></svg><svg class="a" style="left:42px;top:145px;" width="16" height="16" viewBox="0 0 16 16"><path d="M2 4 L8 1.5 L14 4 V12 L8 14.5 L2 12Z" fill="#d9a94a" stroke="#a87a2a" stroke-width=".8"/><path d="M2 4 L8 6.5 L14 4 M8 6.5 V14.5" stroke="#a87a2a" stroke-width=".8" fill="none"/></svg><div class="t" style="left:63px;top:148px;font-size:12px;line-height:12px;color:#333;font-weight:400;">Vorlauf</div><div class="a" style="left:50px;top:169px;width:10px;height:1px;background-image:linear-gradient(90deg,#8a8a8a 50%,transparent 50%);background-size:2px 1px"></div><svg class="a" style="left:46px;top:165px;" width="9" height="9" viewBox="0 0 9 9"><rect x="0.5" y="0.5" width="8" height="8" fill="#fbfbfb" stroke="#9a9a9a"/><path d="M2 4.5 H7" stroke="#2a3a6a"/><path d="M4.5 2 V7" stroke="#2a3a6a"/></svg><svg class="a" style="left:61px;top:161px;" width="16" height="16" viewBox="0 0 16 16"><path d="M1 3 L6 1 L11 3 V11 L6 13 L1 11Z" fill="#d9a94a" stroke="#a87a2a" stroke-width=".8"/><path d="M7 6 H12.5 L15 8.5 V15 H7Z" fill="#fff" stroke="#999" stroke-width=".8"/></svg><div class="t" style="left:82px;top:164px;font-size:12px;line-height:12px;color:#333;font-weight:400;">Bechtle1235498</div><div class="a" style="left:50px;top:185px;width:10px;height:1px;background-image:linear-gradient(90deg,#8a8a8a 50%,transparent 50%);background-size:2px 1px"></div><svg class="a" style="left:46px;top:181px;" width="9" height="9" viewBox="0 0 9 9"><rect x="0.5" y="0.5" width="8" height="8" fill="#fbfbfb" stroke="#9a9a9a"/><path d="M2 4.5 H7" stroke="#2a3a6a"/><path d="M4.5 2 V7" stroke="#2a3a6a"/></svg><svg class="a" style="left:61px;top:177px;" width="16" height="16" viewBox="0 0 16 16"><path d="M1 3 L6 1 L11 3 V11 L6 13 L1 11Z" fill="#d9a94a" stroke="#a87a2a" stroke-width=".8"/><path d="M7 6 H12.5 L15 8.5 V15 H7Z" fill="#fff" stroke="#999" stroke-width=".8"/></svg><div class="t" style="left:82px;top:180px;font-size:12px;line-height:12px;color:#333;font-weight:400;">Bestellung12354</div><div class="a" style="left:31px;top:201px;width:10px;height:1px;background-image:linear-gradient(90deg,#8a8a8a 50%,transparent 50%);background-size:2px 1px"></div><svg class="a" style="left:27px;top:197px;" width="9" height="9" viewBox="0 0 9 9"><rect x="0.5" y="0.5" width="8" height="8" fill="#fbfbfb" stroke="#9a9a9a"/><path d="M2 4.5 H7" stroke="#2a3a6a"/><path d="M4.5 2 V7" stroke="#2a3a6a"/></svg><svg class="a" style="left:42px;top:193px;" width="16" height="16" viewBox="0 0 16 16"><path d="M1 7 H15 L13 14 H3Z" fill="#d8dde2" stroke="#7a8a99"/><path d="M4 7 L7 2 M12 7 L9 2" stroke="#3a7ad8" stroke-width="1.2"/><path d="M4 9.5 H12 M5 12 H11" stroke="#999" stroke-width=".7"/></svg><div class="t" style="left:63px;top:196px;font-size:12px;line-height:12px;color:#333;font-weight:400;">Einkauf</div><div class="a" style="left:31px;top:217px;width:10px;height:1px;background-image:linear-gradient(90deg,#8a8a8a 50%,transparent 50%);background-size:2px 1px"></div><svg class="a" style="left:27px;top:213px;" width="9" height="9" viewBox="0 0 9 9"><rect x="0.5" y="0.5" width="8" height="8" fill="#fbfbfb" stroke="#9a9a9a"/><path d="M2 4.5 H7" stroke="#2a3a6a"/><path d="M4.5 2 V7" stroke="#2a3a6a"/></svg><svg class="a" style="left:42px;top:209px;" width="16" height="16" viewBox="0 0 16 16"><rect x="1" y="3" width="9" height="8" fill="#f3a24a" stroke="#b86e20" stroke-width=".7"/><path d="M10 5 H13 L15 8 V11 H10Z" fill="#6aaee8" stroke="#3a7ab8" stroke-width=".7"/><circle cx="4" cy="12.5" r="1.7" fill="#555"/><circle cx="12" cy="12.5" r="1.7" fill="#555"/></svg><div class="t" style="left:63px;top:212px;font-size:12px;line-height:12px;color:#333;font-weight:400;">Verkauf</div><div class="a" style="left:31px;top:233px;width:10px;height:1px;background-image:linear-gradient(90deg,#8a8a8a 50%,transparent 50%);background-size:2px 1px"></div><svg class="a" style="left:27px;top:229px;" width="9" height="9" viewBox="0 0 9 9"><rect x="0.5" y="0.5" width="8" height="8" fill="#fbfbfb" stroke="#9a9a9a"/><path d="M2 4.5 H7" stroke="#2a3a6a"/><path d="M4.5 2 V7" stroke="#2a3a6a"/></svg><svg class="a" style="left:42px;top:225px;" width="16" height="16" viewBox="0 0 16 16"><path d="M2 6 H14 V14 H2Z" fill="#d9a94a" stroke="#a87a2a" stroke-width=".8"/><path d="M2 6 L0.5 3 L7 2 L8 6 M14 6 L15.5 3 L9 2 L8 6" fill="#e8c070" stroke="#a87a2a" stroke-width=".8"/></svg><div class="t" style="left:63px;top:228px;font-size:12px;line-height:12px;color:#333;font-weight:400;">Wareneingang</div><div class="a" style="left:31px;top:249px;width:10px;height:1px;background-image:linear-gradient(90deg,#8a8a8a 50%,transparent 50%);background-size:2px 1px"></div><svg class="a" style="left:27px;top:245px;" width="9" height="9" viewBox="0 0 9 9"><rect x="0.5" y="0.5" width="8" height="8" fill="#fbfbfb" stroke="#9a9a9a"/><path d="M2 4.5 H7" stroke="#2a3a6a"/><path d="M4.5 2 V7" stroke="#2a3a6a"/></svg><svg class="a" style="left:42px;top:241px;" width="16" height="16" viewBox="0 0 16 16"><rect x="2" y="2" width="12" height="13" fill="#e2b35a" stroke="#a87a2a" stroke-width=".8"/><rect x="4.5" y="5" width="7" height="7" fill="#8ad040"/><path d="M5 8.5 H11 M8.5 6.5 L11 8.5 L8.5 10.5" stroke="#2a7a1a" stroke-width="1" fill="none"/></svg><div class="t" style="left:63px;top:244px;font-size:12px;line-height:12px;color:#333;font-weight:400;">Warenausgang</div><div class="a" style="left:31px;top:265px;width:10px;height:1px;background-image:linear-gradient(90deg,#8a8a8a 50%,transparent 50%);background-size:2px 1px"></div><svg class="a" style="left:27px;top:261px;" width="9" height="9" viewBox="0 0 9 9"><rect x="0.5" y="0.5" width="8" height="8" fill="#fbfbfb" stroke="#9a9a9a"/><path d="M2 4.5 H7" stroke="#2a3a6a"/><path d="M4.5 2 V7" stroke="#2a3a6a"/></svg><svg class="a" style="left:42px;top:257px;" width="16" height="16" viewBox="0 0 16 16"><path d="M1 12 L6 6 L12 3 L15 5 L11 8 L13 10 L8 14 L3 15Z" fill="#f0c050" stroke="#c09030" stroke-width=".7"/></svg><div class="t" style="left:63px;top:260px;font-size:12px;line-height:12px;color:#333;font-weight:400;">Nicht zugeordnet</div><div class="a" style="left:31px;top:281px;width:10px;height:1px;background-image:linear-gradient(90deg,#8a8a8a 50%,transparent 50%);background-size:2px 1px"></div><svg class="a" style="left:27px;top:277px;" width="9" height="9" viewBox="0 0 9 9"><rect x="0.5" y="0.5" width="8" height="8" fill="#fbfbfb" stroke="#9a9a9a"/><path d="M2 4.5 H7" stroke="#2a3a6a"/><path d="M4.5 2 V7" stroke="#2a3a6a"/></svg><svg class="a" style="left:42px;top:273px;" width="16" height="16" viewBox="0 0 16 16"><rect x="1" y="5" width="14" height="7" rx="2" fill="#b8c8d8" stroke="#6a7a8a"/><path d="M3 9 H13" stroke="#3a8a3a" stroke-dasharray="1 1"/></svg><div class="t" style="left:63px;top:276px;font-size:12px;line-height:12px;color:#333;font-weight:400;">SNMP</div><div class="a" style="left:31px;top:297px;width:10px;height:1px;background-image:linear-gradient(90deg,#8a8a8a 50%,transparent 50%);background-size:2px 1px"></div><svg class="a" style="left:27px;top:293px;" width="9" height="9" viewBox="0 0 9 9"><rect x="0.5" y="0.5" width="8" height="8" fill="#fbfbfb" stroke="#9a9a9a"/><path d="M2 4.5 H7" stroke="#2a3a6a"/><path d="M4.5 2 V7" stroke="#2a3a6a"/></svg><svg class="a" style="left:42px;top:289px;" width="16" height="16" viewBox="0 0 16 16"><circle cx="7" cy="4.5" r="3" fill="#f2c794"/><path d="M4 3.5 C4 0.5, 10 0.5, 10 3.5" fill="#8a5a22"/><path d="M1.5 14 C1.5 8.5, 12.5 8.5, 12.5 14Z" fill="#3c93d6"/><circle cx="12" cy="12" r="3.5" fill="#5cb033"/><path d="M12 10 V14 M10 12 H14" stroke="#fff" stroke-width="1.2"/></svg><div class="t" style="left:63px;top:292px;font-size:12px;line-height:12px;color:#333;font-weight:400;">Neue Mitarbeiter</div><div class="a" style="left:31px;top:313px;width:10px;height:1px;background-image:linear-gradient(90deg,#8a8a8a 50%,transparent 50%);background-size:2px 1px"></div><svg class="a" style="left:27px;top:309px;" width="9" height="9" viewBox="0 0 9 9"><rect x="0.5" y="0.5" width="8" height="8" fill="#fbfbfb" stroke="#9a9a9a"/><path d="M2 4.5 H7" stroke="#2a3a6a"/><path d="M4.5 2 V7" stroke="#2a3a6a"/></svg><svg class="a" style="left:42px;top:305px;" width="16" height="16" viewBox="0 0 16 16"><path d="M1.5 4 C1.5 1.5, 14.5 1.5, 14.5 4 V15.5 H1.5Z" fill="#fbe4cc" stroke="#b86a3a" stroke-width=".7"/><path d="M1.5 3.8 C1.5 1, 14.5 1, 14.5 3.8Z" fill="#a8481e"/><g fill="#f6e8d8" stroke="#7a4a2a" stroke-width=".6"><rect x="3" y="5.5" width="2.4" height="2"/><rect x="6.8" y="5.5" width="2.4" height="2"/><rect x="10.6" y="5.5" width="2.4" height="2"/><rect x="3" y="9.5" width="2.4" height="2.4"/><rect x="10.6" y="9.5" width="2.4" height="2.4"/></g><rect x="6.9" y="9.8" width="2.2" height="5.4" fill="#8a5a3a"/><path d="M1 15.3 H15" stroke="#b86a3a" stroke-width="1.1"/></svg><div class="t" style="left:63px;top:308px;font-size:12px;line-height:12px;color:#333;font-weight:400;">Dienstleister Böck</div><div class="a" style="left:31px;top:329px;width:10px;height:1px;background-image:linear-gradient(90deg,#8a8a8a 50%,transparent 50%);background-size:2px 1px"></div><svg class="a" style="left:27px;top:325px;" width="9" height="9" viewBox="0 0 9 9"><rect x="0.5" y="0.5" width="8" height="8" fill="#fbfbfb" stroke="#9a9a9a"/><path d="M2 4.5 H7" stroke="#2a3a6a"/><path d="M4.5 2 V7" stroke="#2a3a6a"/></svg><svg class="a" style="left:42px;top:321px;" width="16" height="16" viewBox="0 0 16 16"><path d="M1.5 4 C1.5 1.5, 14.5 1.5, 14.5 4 V15.5 H1.5Z" fill="#fbe4cc" stroke="#b86a3a" stroke-width=".7"/><path d="M1.5 3.8 C1.5 1, 14.5 1, 14.5 3.8Z" fill="#a8481e"/><g fill="#f6e8d8" stroke="#7a4a2a" stroke-width=".6"><rect x="3" y="5.5" width="2.4" height="2"/><rect x="6.8" y="5.5" width="2.4" height="2"/><rect x="10.6" y="5.5" width="2.4" height="2"/><rect x="3" y="9.5" width="2.4" height="2.4"/><rect x="10.6" y="9.5" width="2.4" height="2.4"/></g><rect x="6.9" y="9.8" width="2.2" height="5.4" fill="#8a5a3a"/><path d="M1 15.3 H15" stroke="#b86a3a" stroke-width="1.1"/></svg><div class="t" style="left:63px;top:324px;font-size:12px;line-height:12px;color:#333;font-weight:400;">FCS Eltville</div><div class="a" style="left:31px;top:345px;width:10px;height:1px;background-image:linear-gradient(90deg,#8a8a8a 50%,transparent 50%);background-size:2px 1px"></div><svg class="a" style="left:27px;top:341px;" width="9" height="9" viewBox="0 0 9 9"><rect x="0.5" y="0.5" width="8" height="8" fill="#fbfbfb" stroke="#9a9a9a"/><path d="M2 4.5 H7" stroke="#2a3a6a"/></svg><svg class="a" style="left:42px;top:337px;" width="16" height="16" viewBox="0 0 16 16"><path d="M1.5 4 C1.5 1.5, 14.5 1.5, 14.5 4 V15.5 H1.5Z" fill="#fbe4cc" stroke="#b86a3a" stroke-width=".7"/><path d="M1.5 3.8 C1.5 1, 14.5 1, 14.5 3.8Z" fill="#a8481e"/><g fill="#f6e8d8" stroke="#7a4a2a" stroke-width=".6"><rect x="3" y="5.5" width="2.4" height="2"/><rect x="6.8" y="5.5" width="2.4" height="2"/><rect x="10.6" y="5.5" width="2.4" height="2"/><rect x="3" y="9.5" width="2.4" height="2.4"/><rect x="10.6" y="9.5" width="2.4" height="2.4"/></g><rect x="6.9" y="9.8" width="2.2" height="5.4" fill="#8a5a3a"/><path d="M1 15.3 H15" stroke="#b86a3a" stroke-width="1.1"/></svg><div class="t" style="left:63px;top:340px;font-size:12px;line-height:12px;color:#333;font-weight:400;">FCS Nürnberg</div><div class="a" style="left:50px;top:361px;width:10px;height:1px;background-image:linear-gradient(90deg,#8a8a8a 50%,transparent 50%);background-size:2px 1px"></div><svg class="a" style="left:46px;top:357px;" width="9" height="9" viewBox="0 0 9 9"><rect x="0.5" y="0.5" width="8" height="8" fill="#fbfbfb" stroke="#9a9a9a"/><path d="M2 4.5 H7" stroke="#2a3a6a"/></svg><svg class="a" style="left:61px;top:353px;" width="16" height="16" viewBox="0 0 16 16"><rect x="2.5" y="0.5" width="12" height="12" fill="#fafafa" stroke="#8a96a8" stroke-width=".9"/><g fill="#a8c0e0"><rect x="4.5" y="2" width="1.3" height="1.3"/><rect x="7" y="2" width="1.3" height="1.3"/><rect x="9.5" y="2" width="1.3" height="1.3"/><rect x="12" y="2" width="1.3" height="1.3"/><rect x="4.5" y="4.5" width="1.3" height="1.3"/><rect x="7" y="4.5" width="1.3" height="1.3"/><rect x="9.5" y="4.5" width="1.3" height="1.3"/><rect x="12" y="4.5" width="1.3" height="1.3"/><rect x="4.5" y="7" width="1.3" height="1.3"/><rect x="7" y="7" width="1.3" height="1.3"/><rect x="9.5" y="7" width="1.3" height="1.3"/><rect x="12" y="7" width="1.3" height="1.3"/></g><rect x="7.5" y="10" width="2" height="4" fill="#c08040"/><path d="M0.5 15 H16" stroke="#6cbc3c" stroke-width="2"/></svg><div class="t" style="left:82px;top:356px;font-size:12px;line-height:12px;color:#333;font-weight:400;">Ostendstraße 132</div><div class="a" style="left:69px;top:377px;width:10px;height:1px;background-image:linear-gradient(90deg,#8a8a8a 50%,transparent 50%);background-size:2px 1px"></div><svg class="a" style="left:65px;top:373px;" width="9" height="9" viewBox="0 0 9 9"><rect x="0.5" y="0.5" width="8" height="8" fill="#fbfbfb" stroke="#9a9a9a"/><path d="M2 4.5 H7" stroke="#2a3a6a"/></svg><svg class="a" style="left:80px;top:369px;" width="16" height="16" viewBox="0 0 16 16"><rect x="2.5" y="0.5" width="12" height="12" fill="#fafafa" stroke="#8a96a8" stroke-width=".9"/><path d="M4.5 2.5 H12.5 M4.5 4.5 H12.5" stroke="#d8284a" stroke-width="1.3" stroke-dasharray="1.2 .6"/><path d="M4.5 6.5 H12.5 M4.5 8.5 H12.5" stroke="#9ab4d8" stroke-width="1.1" stroke-dasharray="1 1"/><rect x="7.5" y="10" width="2" height="4" fill="#c08040"/><path d="M0.5 15 H16" stroke="#6cbc3c" stroke-width="2"/></svg><div class="t" style="left:101px;top:372px;font-size:12px;line-height:12px;color:#333;font-weight:400;">0_UG</div><div class="a" style="left:88px;top:393px;width:10px;height:1px;background-image:linear-gradient(90deg,#8a8a8a 50%,transparent 50%);background-size:2px 1px"></div><svg class="a" style="left:99px;top:385px;" width="16" height="16" viewBox="0 0 16 16"><rect x="3" y="1" width="9" height="14" fill="#d9a04a" stroke="#9a6a2a" stroke-width=".8"/><path d="M0.5 15.5 H15.5" stroke="#8a5a20" stroke-width="1.2"/><rect x="8" y="8" width="7" height="6" fill="#f0c050" stroke="#a08030" stroke-width=".7"/></svg><div class="t" style="left:120px;top:388px;font-size:12px;line-height:12px;color:#333;font-weight:400;">***Verschrottung***</div><div class="a" style="left:88px;top:409px;width:10px;height:1px;background-image:linear-gradient(90deg,#8a8a8a 50%,transparent 50%);background-size:2px 1px"></div><svg class="a" style="left:84px;top:405px;" width="9" height="9" viewBox="0 0 9 9"><rect x="0.5" y="0.5" width="8" height="8" fill="#fbfbfb" stroke="#9a9a9a"/><path d="M2 4.5 H7" stroke="#2a3a6a"/><path d="M4.5 2 V7" stroke="#2a3a6a"/></svg><svg class="a" style="left:99px;top:401px;" width="16" height="16" viewBox="0 0 16 16"><rect x="4" y="1" width="9" height="14" fill="#d9a04a" stroke="#9a6a2a" stroke-width=".8"/><path d="M1 15.5 H15" stroke="#8a5a20" stroke-width="1.2"/><circle cx="11" cy="8.5" r=".8" fill="#6a4a1a"/></svg><div class="t" style="left:120px;top:404px;font-size:12px;line-height:12px;color:#333;font-weight:400;">Tiefgarage</div><div class="a" style="left:69px;top:425px;width:10px;height:1px;background-image:linear-gradient(90deg,#8a8a8a 50%,transparent 50%);background-size:2px 1px"></div><svg class="a" style="left:65px;top:421px;" width="9" height="9" viewBox="0 0 9 9"><rect x="0.5" y="0.5" width="8" height="8" fill="#fbfbfb" stroke="#9a9a9a"/><path d="M2 4.5 H7" stroke="#2a3a6a"/></svg><svg class="a" style="left:80px;top:417px;" width="16" height="16" viewBox="0 0 16 16"><rect x="2.5" y="0.5" width="12" height="12" fill="#fafafa" stroke="#8a96a8" stroke-width=".9"/><path d="M4.5 2.5 H12.5 M4.5 4.5 H12.5" stroke="#d8284a" stroke-width="1.3" stroke-dasharray="1.2 .6"/><path d="M4.5 6.5 H12.5 M4.5 8.5 H12.5" stroke="#9ab4d8" stroke-width="1.1" stroke-dasharray="1 1"/><rect x="7.5" y="10" width="2" height="4" fill="#c08040"/><path d="M0.5 15 H16" stroke="#6cbc3c" stroke-width="2"/></svg><div class="t" style="left:101px;top:420px;font-size:12px;line-height:12px;color:#333;font-weight:400;">1. OG</div><div class="a" style="left:88px;top:441px;width:10px;height:1px;background-image:linear-gradient(90deg,#8a8a8a 50%,transparent 50%);background-size:2px 1px"></div><svg class="a" style="left:84px;top:437px;" width="9" height="9" viewBox="0 0 9 9"><rect x="0.5" y="0.5" width="8" height="8" fill="#fbfbfb" stroke="#9a9a9a"/><path d="M2 4.5 H7" stroke="#2a3a6a"/></svg><svg class="a" style="left:99px;top:433px;" width="16" height="16" viewBox="0 0 16 16"><rect x="4" y="1" width="9" height="14" fill="#d9a04a" stroke="#9a6a2a" stroke-width=".8"/><path d="M1 15.5 H15" stroke="#8a5a20" stroke-width="1.2"/><circle cx="11" cy="8.5" r=".8" fill="#6a4a1a"/></svg><div class="t" style="left:120px;top:436px;font-size:12px;line-height:12px;color:#333;font-weight:400;">Abstellraum</div><div class="a" style="left:107px;top:457px;width:10px;height:1px;background-image:linear-gradient(90deg,#8a8a8a 50%,transparent 50%);background-size:2px 1px"></div><svg class="a" style="left:103px;top:453px;" width="9" height="9" viewBox="0 0 9 9"><rect x="0.5" y="0.5" width="8" height="8" fill="#fbfbfb" stroke="#9a9a9a"/><path d="M2 4.5 H7" stroke="#2a3a6a"/><path d="M4.5 2 V7" stroke="#2a3a6a"/></svg><svg class="a" style="left:118px;top:449px;" width="16" height="16" viewBox="0 0 16 16"><circle cx="6" cy="5" r="3" fill="#d9a04a"/><circle cx="11" cy="4" r="3" fill="#c89040"/><path d="M1 15 C1 9, 11 9, 11 15Z" fill="#d9a04a"/></svg><div class="t" style="left:139px;top:452px;font-size:12px;line-height:12px;color:#333;font-weight:400;">Putzkolonne</div></div><div class="a" style="left:521px;top:171px;width:850px;height:645px;border-left:2px solid #bdbdbd;border-right:1px solid #bdbdbd;border-top:1px solid #bdbdbd;border-bottom:2px solid #bdbdbd;box-sizing:border-box;"></div><div class="a" style="left:521px;top:147px;width:88px;height:25px;background:#f0f0f0;border:1px solid #bdbdbd;border-bottom:none;box-sizing:border-box;border-left:2px solid #bdbdbd"></div><svg class="a" style="left:533px;top:150px;" width="16" height="17" viewBox="0 0 16 17"><rect x="1.5" y="1.5" width="12" height="14" fill="#fbfbfb" stroke="#777"/><path d="M3.5 4.5 H8 M9 4.5 H12" stroke="#6a8ab8" stroke-width="1.5"/><path d="M9 4.5 H12" stroke="#e0a030" stroke-width="1.5"/><path d="M3.5 8 H12 M3.5 10.5 H12" stroke="#6a8ab8" stroke-width="1"/><path d="M3.5 13 H12" stroke="#5cb033" stroke-width="1.5"/></svg><div class="t" style="left:551.5px;top:154px;font-size:11px;line-height:11px;color:#333;font-weight:400;">Übersicht</div><svg class="a" style="left:618px;top:150px;" width="18" height="17" viewBox="0 0 18 17"><rect x="5.5" y="5.5" width="11" height="10" fill="#fff" stroke="#888"/><rect x="3.5" y="3.5" width="11" height="10" fill="#fff" stroke="#888"/><rect x="1.5" y="1.5" width="11" height="10" fill="#fff" stroke="#888"/><path d="M3.5 4.5 h2 M6.5 4.5 h4 M3.5 6.5 h2 M6.5 6.5 h4 M3.5 8.5 h7" stroke="#445"/></svg><div class="t" style="left:637.5px;top:154px;font-size:11px;line-height:11px;color:#333;font-weight:400;">Helpdesk</div><svg class="a" style="left:704px;top:150px;" width="13" height="17" viewBox="0 0 13 17"><path d="M4 13 V4 C4 1, 9 1, 9 4 V12 C9 15, 6 15, 6 12 V5" stroke="#8a8a8a" stroke-width="1.3" fill="none"/></svg><div class="t" style="left:721.5px;top:154px;font-size:11px;line-height:11px;color:#333;font-weight:400;">Zusatz</div><svg class="a" style="left:775px;top:150px;" width="18" height="17" viewBox="0 0 18 17"><rect x="2.5" y="1.5" width="11" height="14" fill="#aed3f0" stroke="#3b86c6"/><path d="M1 4 h3 M1 7 h3 M1 10 h3 M1 13 h3" stroke="#4a6a90"/><path d="M8 10 h4 v-3 l5 4.5 -5 4.5 v-3 h-4z" fill="#7fd03a" stroke="#3e8c1c" stroke-width=".7"/></svg><div class="t" style="left:794px;top:154px;font-size:11px;line-height:11px;color:#333;font-weight:400;">Berichte</div><div class="a" style="left:523px;top:198px;width:847px;height:1px;background:#bdbdbd"></div><div class="a" style="left:522px;top:174px;width:95px;height:25px;background:#f0f0f0;border:1px solid #bdbdbd;border-bottom:none;box-sizing:border-box"></div><svg class="a" style="left:535px;top:177px;" width="14" height="16" viewBox="0 0 14 16"><circle cx="7" cy="5" r="3.3" fill="#f2c794"/><path d="M3.6 4.5 C3.5 0.5, 10.5 0.5, 10.4 4.5 C9 3, 5 3, 3.6 4.5Z" fill="#8a5a22"/><path d="M1 15 C1 9, 13 9, 13 15Z" fill="#3c93d6"/><path d="M5 10 L7 12 L9 10" fill="#fff"/></svg><div class="t" style="left:552.5px;top:181px;font-size:11px;line-height:11px;color:#333;font-weight:400;">Mitarbeiter</div><svg class="a" style="left:625px;top:177px;" width="19" height="17" viewBox="0 0 19 17"><path d="M2 2 H10 V0.5 L15 4.5 L10 8.5 V7 H5 V9 H2Z" fill="#8fd42a" stroke="#4e9a12" stroke-width=".8"/><path d="M15 15 H7 V16.5 L2 12.5 L7 8.5 V10 H12 V8 H15Z" fill="#8fd42a" stroke="#4e9a12" stroke-width=".8"/><path d="M12 11 L18 4" stroke="#e8a040" stroke-width="2.2"/><path d="M17 5 L18.5 3.3" stroke="#c8c8c8" stroke-width="2.2"/></svg><div class="t" style="left:645.5px;top:181px;font-size:11px;line-height:11px;color:#333;font-weight:400;">Übergabe / Rückgabe</div><svg class="a" style="left:773px;top:178px;" width="15" height="15" viewBox="0 0 15 15"><rect x=".5" y=".5" width="14" height="14" fill="#fff" stroke="#888"/><rect x="1" y="1" width="4.5" height="4.5" fill="#d33"/><rect x="5.5" y="5.5" width="4.5" height="4.5" fill="#111"/><rect x="10" y="1" width="4" height="4.5" fill="#3a3"/><rect x="1" y="10" width="4.5" height="4" fill="#38c"/><rect x="10" y="10" width="4" height="4" fill="#d33"/></svg><div class="t" style="left:790.5px;top:181px;font-size:11px;line-height:11px;color:#333;font-weight:400;">Katalogsoftware</div><svg class="a" style="left:891px;top:177px;" width="17" height="16" viewBox="0 0 17 16"><path d="M1.5 1.5 H10 L13 4.5 V15 H1.5Z" fill="#fff" stroke="#999"/><path d="M4 4 L7 7 M7 4 L4 7" stroke="#c33"/><circle cx="10" cy="10" r="2.5" fill="#6a4a2a"/><path d="M5 16 C5 12, 15 12, 15 16Z" fill="#c89040"/></svg><div class="t" style="left:910.5px;top:181px;font-size:11px;line-height:11px;color:#333;font-weight:400;">Vertrag</div><svg class="a" style="left:968px;top:177px;" width="18" height="16" viewBox="0 0 18 16"><ellipse cx="11" cy="3" rx="4" ry="2" fill="#f0c050" stroke="#a08030" stroke-width=".7"/><rect x="7" y="3" width="8" height="10" fill="#f0c050"/><path d="M7 6 h8 M7 9 h8 M7 12 h8" stroke="#a08030" stroke-width=".8"/><ellipse cx="7" cy="13" rx="6" ry="2.5" fill="#e8b040" stroke="#a08030" stroke-width=".7"/><path d="M1 15.5 V12" stroke="#777"/></svg><div class="t" style="left:988px;top:181px;font-size:11px;line-height:11px;color:#333;font-weight:400;">Verrechnung</div><svg class="a" style="left:1071px;top:179px;" width="16" height="12" viewBox="0 0 16 12"><rect x=".5" y=".5" width="15" height="11" fill="#dcecf9" stroke="#3b86c6"/><path d="M.5 .5 L8 7 L15.5 .5 M.5 11.5 L6 6 M15.5 11.5 L10 6" stroke="#3b86c6" fill="none"/></svg><div class="t" style="left:1089px;top:181px;font-size:11px;line-height:11px;color:#333;font-weight:400;">Signatur</div><div class="a" style="left:529px;top:202px;width:835px;height:606px;border:1px solid #bdbdbd;box-sizing:border-box"></div><div class="t" style="left:541px;top:226px;font-size:11px;line-height:11px;color:#3a3a3a;font-weight:700;">Nachname:</div><div class="a" style="left:654px;top:221px;width:190px;height:20px;background:#ffffff;border:1px solid #a8a8a8;box-sizing:border-box"></div><div class="t" style="left:658px;top:226px;font-size:11px;line-height:11px;color:#3a3a3a;font-weight:400;">Schüller</div><div class="t" style="left:541px;top:252px;font-size:11px;line-height:11px;color:#3a3a3a;font-weight:400;">Standort:</div><div class="a" style="left:654px;top:247px;width:143px;height:20px;background:#f0f0f0;border:1px solid #a8a8a8;box-sizing:border-box"></div><div class="t" style="left:658px;top:252px;font-size:11px;line-height:11px;color:#3a3a3a;font-weight:400;">FCS Nürnberg</div><svg class="a" style="left:801px;top:249px;" width="16" height="16" viewBox="0 0 16 16"><rect x="7" y="4.5" width="2" height="6" fill="#505050"/><rect x="0.5" y="7.5" width="6.5" height="7.5" rx="1" fill="#a8a8a8" stroke="#505050"/><rect x="1.5" y="3" width="5.5" height="4.5" rx=".5" fill="#a8a8a8" stroke="#505050"/><rect x="2" y="0" width="4.5" height="2.8" fill="#505050"/><rect x="9" y="7.5" width="6.5" height="7.5" rx="1" fill="#a8a8a8" stroke="#505050"/><rect x="9" y="3" width="5.5" height="4.5" rx=".5" fill="#a8a8a8" stroke="#505050"/><rect x="9.5" y="0" width="4.5" height="2.8" fill="#505050"/><path d="M2.5 4.6 H6 M10 4.6 H13.5 M1.5 9 H6 M10 9 H14.5 M1.5 12.6 H6 M10 12.6 H14.5" stroke="#eeeeee" stroke-width="1"/></svg><svg class="a" style="left:824px;top:249px;" width="16" height="16" viewBox="0 0 16 16"><path d="M3.5 3.5 L12.5 12.5 M12.5 3.5 L3.5 12.5" stroke="#a83a2c" stroke-width="5" stroke-linecap="round"/><path d="M3.5 3.5 L12.5 12.5 M12.5 3.5 L3.5 12.5" stroke="#ec5f4c" stroke-width="3.2" stroke-linecap="round"/></svg><div class="t" style="left:541px;top:278px;font-size:11px;line-height:11px;color:#3a3a3a;font-weight:400;">Gebäude:</div><div class="a" style="left:654px;top:273px;width:143px;height:20px;background:#f0f0f0;border:1px solid #a8a8a8;box-sizing:border-box"></div><div class="t" style="left:658px;top:278px;font-size:11px;line-height:11px;color:#3a3a3a;font-weight:400;">Ostendstraße 132</div><svg class="a" style="left:801px;top:275px;" width="16" height="16" viewBox="0 0 16 16"><rect x="7" y="4.5" width="2" height="6" fill="#505050"/><rect x="0.5" y="7.5" width="6.5" height="7.5" rx="1" fill="#a8a8a8" stroke="#505050"/><rect x="1.5" y="3" width="5.5" height="4.5" rx=".5" fill="#a8a8a8" stroke="#505050"/><rect x="2" y="0" width="4.5" height="2.8" fill="#505050"/><rect x="9" y="7.5" width="6.5" height="7.5" rx="1" fill="#a8a8a8" stroke="#505050"/><rect x="9" y="3" width="5.5" height="4.5" rx=".5" fill="#a8a8a8" stroke="#505050"/><rect x="9.5" y="0" width="4.5" height="2.8" fill="#505050"/><path d="M2.5 4.6 H6 M10 4.6 H13.5 M1.5 9 H6 M10 9 H14.5 M1.5 12.6 H6 M10 12.6 H14.5" stroke="#eeeeee" stroke-width="1"/></svg><svg class="a" style="left:824px;top:275px;" width="16" height="16" viewBox="0 0 16 16"><path d="M3.5 3.5 L12.5 12.5 M12.5 3.5 L3.5 12.5" stroke="#a83a2c" stroke-width="5" stroke-linecap="round"/><path d="M3.5 3.5 L12.5 12.5 M12.5 3.5 L3.5 12.5" stroke="#ec5f4c" stroke-width="3.2" stroke-linecap="round"/></svg><div class="t" style="left:541px;top:304px;font-size:11px;line-height:11px;color:#3a3a3a;font-weight:400;">Stockwerk:</div><div class="a" style="left:654px;top:299px;width:143px;height:20px;background:#f0f0f0;border:1px solid #a8a8a8;box-sizing:border-box"></div><div class="t" style="left:658px;top:304px;font-size:11px;line-height:11px;color:#3a3a3a;font-weight:400;">1. OG</div><svg class="a" style="left:801px;top:301px;" width="16" height="16" viewBox="0 0 16 16"><rect x="7" y="4.5" width="2" height="6" fill="#505050"/><rect x="0.5" y="7.5" width="6.5" height="7.5" rx="1" fill="#a8a8a8" stroke="#505050"/><rect x="1.5" y="3" width="5.5" height="4.5" rx=".5" fill="#a8a8a8" stroke="#505050"/><rect x="2" y="0" width="4.5" height="2.8" fill="#505050"/><rect x="9" y="7.5" width="6.5" height="7.5" rx="1" fill="#a8a8a8" stroke="#505050"/><rect x="9" y="3" width="5.5" height="4.5" rx=".5" fill="#a8a8a8" stroke="#505050"/><rect x="9.5" y="0" width="4.5" height="2.8" fill="#505050"/><path d="M2.5 4.6 H6 M10 4.6 H13.5 M1.5 9 H6 M10 9 H14.5 M1.5 12.6 H6 M10 12.6 H14.5" stroke="#eeeeee" stroke-width="1"/></svg><svg class="a" style="left:824px;top:301px;" width="16" height="16" viewBox="0 0 16 16"><path d="M3.5 3.5 L12.5 12.5 M12.5 3.5 L3.5 12.5" stroke="#a83a2c" stroke-width="5" stroke-linecap="round"/><path d="M3.5 3.5 L12.5 12.5 M12.5 3.5 L3.5 12.5" stroke="#ec5f4c" stroke-width="3.2" stroke-linecap="round"/></svg><div class="t" style="left:541px;top:330px;font-size:11px;line-height:11px;color:#3a3a3a;font-weight:400;">Raum:</div><div class="a" style="left:654px;top:325px;width:143px;height:20px;background:#f0f0f0;border:1px solid #a8a8a8;box-sizing:border-box"></div><div class="t" style="left:658px;top:330px;font-size:11px;line-height:11px;color:#3a3a3a;font-weight:400;">Marketing</div><svg class="a" style="left:801px;top:327px;" width="16" height="16" viewBox="0 0 16 16"><rect x="7" y="4.5" width="2" height="6" fill="#505050"/><rect x="0.5" y="7.5" width="6.5" height="7.5" rx="1" fill="#a8a8a8" stroke="#505050"/><rect x="1.5" y="3" width="5.5" height="4.5" rx=".5" fill="#a8a8a8" stroke="#505050"/><rect x="2" y="0" width="4.5" height="2.8" fill="#505050"/><rect x="9" y="7.5" width="6.5" height="7.5" rx="1" fill="#a8a8a8" stroke="#505050"/><rect x="9" y="3" width="5.5" height="4.5" rx=".5" fill="#a8a8a8" stroke="#505050"/><rect x="9.5" y="0" width="4.5" height="2.8" fill="#505050"/><path d="M2.5 4.6 H6 M10 4.6 H13.5 M1.5 9 H6 M10 9 H14.5 M1.5 12.6 H6 M10 12.6 H14.5" stroke="#eeeeee" stroke-width="1"/></svg><svg class="a" style="left:824px;top:327px;" width="16" height="16" viewBox="0 0 16 16"><path d="M3.5 3.5 L12.5 12.5 M12.5 3.5 L3.5 12.5" stroke="#a83a2c" stroke-width="5" stroke-linecap="round"/><path d="M3.5 3.5 L12.5 12.5 M12.5 3.5 L3.5 12.5" stroke="#ec5f4c" stroke-width="3.2" stroke-linecap="round"/></svg><div class="t" style="left:541px;top:356px;font-size:11px;line-height:11px;color:#3a3a3a;font-weight:400;">Abteilung:</div><div class="a" style="left:654px;top:351px;width:143px;height:20px;background:#f0f0f0;border:1px solid #a8a8a8;box-sizing:border-box"></div><svg class="a" style="left:801px;top:353px;" width="16" height="16" viewBox="0 0 16 16"><rect x="7" y="4.5" width="2" height="6" fill="#505050"/><rect x="0.5" y="7.5" width="6.5" height="7.5" rx="1" fill="#a8a8a8" stroke="#505050"/><rect x="1.5" y="3" width="5.5" height="4.5" rx=".5" fill="#a8a8a8" stroke="#505050"/><rect x="2" y="0" width="4.5" height="2.8" fill="#505050"/><rect x="9" y="7.5" width="6.5" height="7.5" rx="1" fill="#a8a8a8" stroke="#505050"/><rect x="9" y="3" width="5.5" height="4.5" rx=".5" fill="#a8a8a8" stroke="#505050"/><rect x="9.5" y="0" width="4.5" height="2.8" fill="#505050"/><path d="M2.5 4.6 H6 M10 4.6 H13.5 M1.5 9 H6 M10 9 H14.5 M1.5 12.6 H6 M10 12.6 H14.5" stroke="#eeeeee" stroke-width="1"/></svg><svg class="a" style="left:824px;top:353px;" width="16" height="16" viewBox="0 0 16 16"><path d="M3.5 3.5 L12.5 12.5 M12.5 3.5 L3.5 12.5" stroke="#c2c2c2" stroke-width="5" stroke-linecap="round"/><path d="M3.5 3.5 L12.5 12.5 M12.5 3.5 L3.5 12.5" stroke="#d4d4d4" stroke-width="3.2" stroke-linecap="round"/></svg><div class="t" style="left:541px;top:382px;font-size:11px;line-height:11px;color:#3a3a3a;font-weight:400;">Kostenstelle:</div><div class="a" style="left:654px;top:377px;width:143px;height:20px;background:#f0f0f0;border:1px solid #a8a8a8;box-sizing:border-box"></div><div class="t" style="left:658px;top:382px;font-size:11px;line-height:11px;color:#3a3a3a;font-weight:400;">10</div><svg class="a" style="left:801px;top:379px;" width="16" height="16" viewBox="0 0 16 16"><rect x="7" y="4.5" width="2" height="6" fill="#505050"/><rect x="0.5" y="7.5" width="6.5" height="7.5" rx="1" fill="#a8a8a8" stroke="#505050"/><rect x="1.5" y="3" width="5.5" height="4.5" rx=".5" fill="#a8a8a8" stroke="#505050"/><rect x="2" y="0" width="4.5" height="2.8" fill="#505050"/><rect x="9" y="7.5" width="6.5" height="7.5" rx="1" fill="#a8a8a8" stroke="#505050"/><rect x="9" y="3" width="5.5" height="4.5" rx=".5" fill="#a8a8a8" stroke="#505050"/><rect x="9.5" y="0" width="4.5" height="2.8" fill="#505050"/><path d="M2.5 4.6 H6 M10 4.6 H13.5 M1.5 9 H6 M10 9 H14.5 M1.5 12.6 H6 M10 12.6 H14.5" stroke="#eeeeee" stroke-width="1"/></svg><svg class="a" style="left:824px;top:379px;" width="16" height="16" viewBox="0 0 16 16"><path d="M3.5 3.5 L12.5 12.5 M12.5 3.5 L3.5 12.5" stroke="#a83a2c" stroke-width="5" stroke-linecap="round"/><path d="M3.5 3.5 L12.5 12.5 M12.5 3.5 L3.5 12.5" stroke="#ec5f4c" stroke-width="3.2" stroke-linecap="round"/></svg><div class="t" style="left:541px;top:408px;font-size:11px;line-height:11px;color:#3a3a3a;font-weight:400;">Budget:</div><div class="a" style="left:654px;top:403px;width:143px;height:20px;background:#f0f0f0;border:1px solid #a8a8a8;box-sizing:border-box"></div><svg class="a" style="left:801px;top:405px;" width="16" height="16" viewBox="0 0 16 16"><rect x="7" y="4.5" width="2" height="6" fill="#c4c4c4"/><rect x="0.5" y="7.5" width="6.5" height="7.5" rx="1" fill="#d6d6d6" stroke="#c4c4c4"/><rect x="1.5" y="3" width="5.5" height="4.5" rx=".5" fill="#d6d6d6" stroke="#c4c4c4"/><rect x="2" y="0" width="4.5" height="2.8" fill="#c4c4c4"/><rect x="9" y="7.5" width="6.5" height="7.5" rx="1" fill="#d6d6d6" stroke="#c4c4c4"/><rect x="9" y="3" width="5.5" height="4.5" rx=".5" fill="#d6d6d6" stroke="#c4c4c4"/><rect x="9.5" y="0" width="4.5" height="2.8" fill="#c4c4c4"/><path d="M2.5 4.6 H6 M10 4.6 H13.5 M1.5 9 H6 M10 9 H14.5 M1.5 12.6 H6 M10 12.6 H14.5" stroke="#eeeeee" stroke-width="1"/></svg><svg class="a" style="left:824px;top:405px;" width="16" height="16" viewBox="0 0 16 16"><path d="M3.5 3.5 L12.5 12.5 M12.5 3.5 L3.5 12.5" stroke="#c2c2c2" stroke-width="5" stroke-linecap="round"/><path d="M3.5 3.5 L12.5 12.5 M12.5 3.5 L3.5 12.5" stroke="#d4d4d4" stroke-width="3.2" stroke-linecap="round"/></svg><div class="t" style="left:541px;top:434px;font-size:11px;line-height:11px;color:#3a3a3a;font-weight:400;">Firma:</div><div class="a" style="left:654px;top:429px;width:190px;height:20px;background:#ffffff;border:1px solid #a8a8a8;box-sizing:border-box"></div><div class="t" style="left:658px;top:434px;font-size:11px;line-height:11px;color:#3a3a3a;font-weight:400;">FCS Nürnberg</div><div class="t" style="left:541px;top:460px;font-size:11px;line-height:11px;color:#3a3a3a;font-weight:400;">Telefon:</div><div class="a" style="left:654px;top:455px;width:190px;height:20px;background:#ffffff;border:1px solid #a8a8a8;box-sizing:border-box"></div><div class="t" style="left:658px;top:460px;font-size:11px;line-height:11px;color:#3a3a3a;font-weight:400;">+49 (911) 810881-81</div><div class="t" style="left:541px;top:486px;font-size:11px;line-height:11px;color:#3a3a3a;font-weight:400;">Fax:</div><div class="a" style="left:654px;top:481px;width:190px;height:20px;background:#ffffff;border:1px solid #a8a8a8;box-sizing:border-box"></div><div class="t" style="left:541px;top:512px;font-size:11px;line-height:11px;color:#3a3a3a;font-weight:400;">Bemerkung:</div><div class="a" style="left:654px;top:507px;width:525px;height:20px;background:#ffffff;border:1px solid #a8a8a8;box-sizing:border-box"></div><div class="t" style="left:658px;top:512px;font-size:11px;line-height:11px;color:#3a3a3a;font-weight:400;">Werkstudententätigkeit von März 2015 - Februar 2017</div><div class="t" style="left:541px;top:538px;font-size:11px;line-height:11px;color:#3a3a3a;font-weight:400;">Benutzername:</div><div class="a" style="left:654px;top:533px;width:190px;height:20px;background:#ffffff;border:1px solid #a8a8a8;box-sizing:border-box"></div><div class="t" style="left:658px;top:538px;font-size:11px;line-height:11px;color:#3a3a3a;font-weight:400;">rschüller</div><div class="a" style="left:655px;top:563px;width:13px;height:13px;background:#f3f3f3;border:1px solid #d6d6d6;box-sizing:border-box"></div><div class="t" style="left:671.5px;top:564px;font-size:10.7px;line-height:10.7px;color:#a0a0a0;font-weight:400;">durch Nummerngeber erzeugen</div><div class="t" style="left:541px;top:590px;font-size:11px;line-height:11px;color:#3a3a3a;font-weight:400;">Personalnummer:</div><div class="a" style="left:654px;top:585px;width:190px;height:20px;background:#ffffff;border:1px solid #a8a8a8;box-sizing:border-box"></div><div class="a" style="left:655px;top:615px;width:13px;height:13px;background:#f3f3f3;border:1px solid #d6d6d6;box-sizing:border-box"></div><div class="t" style="left:671.5px;top:616px;font-size:10.7px;line-height:10.7px;color:#a0a0a0;font-weight:400;">durch Nummerngeber erzeugen</div><div class="t" style="left:876px;top:226px;font-size:11px;line-height:11px;color:#3a3a3a;font-weight:400;">Vorname:</div><div class="a" style="left:989px;top:221px;width:190px;height:20px;background:#ffffff;border:1px solid #a8a8a8;box-sizing:border-box"></div><div class="t" style="left:993px;top:226px;font-size:11px;line-height:11px;color:#3a3a3a;font-weight:400;">Ruth</div><svg class="a" style="left:989px;top:247px;" width="190" height="125" viewBox="0 0 190 125"><defs><linearGradient id="hg" x1="0" y1="0" x2="1" y2="1"><stop offset="0" stop-color="#5e4e42"/><stop offset="1" stop-color="#473a30"/></linearGradient></defs>
<rect width="190" height="125" fill="#000"/><rect x="38" y="0" width="113" height="125" fill="#7db1cb"/>
<path d="M38 125 L38 108 C44 95, 50 82, 52 66 C54 44, 58 22, 74 12 C88 4, 108 5, 120 18 C125 30, 126 48, 130 68 C133 80, 137 90, 141 96 L128 104 L100 125Z" fill="url(#hg)"/>
<path d="M42 118 C50 100, 56 86, 58 70 M120 60 C124 75, 128 88, 134 95" stroke="#6a5848" stroke-width="2" fill="none" opacity=".7"/>
<rect x="80" y="80" width="31" height="30" fill="#e6b9a2"/>
<ellipse cx="95.5" cy="57" rx="22.5" ry="31" fill="#f0cbb6"/>
<path d="M70 50 C70 28, 80 18, 96 18 C108 18, 116 26, 119 40 C113 30, 104 26, 92 26 C82 27, 74 36, 70 50Z" fill="#4a3b31"/>
<path d="M77 41 C80 39, 85 39, 88 41 M100 41 C104 39, 109 39, 112 41" stroke="#5a4030" stroke-width="1.3" fill="none"/>
<ellipse cx="82.5" cy="45" rx="3.2" ry="1.9" fill="#3a2a22"/><ellipse cx="104" cy="45" rx="3.2" ry="1.9" fill="#3a2a22"/>
<path d="M93 52 C92 57, 92 59, 95 60 C98 59, 98 57, 97 52" stroke="#c89880" stroke-width="1" fill="none"/>
<path d="M84 64 C88 61, 102 61, 106 64 C104 72, 99 76, 95 76 C91 76, 86 72, 84 64Z" fill="#8a2e2e"/>
<path d="M85 64 C89 62, 101 62, 105 64 L104 66.5 C99 65.5, 91 65.5, 86 66.5Z" fill="#fafafa"/>
<ellipse cx="95" cy="72.5" rx="6" ry="3" fill="#e08a8a"/>
<path d="M60 125 C62 112, 70 103, 81 99 L95 107 L109 92 C120 90, 140 96, 151 101 L151 125Z" fill="#f6f6f4"/>
<path d="M81 99 C86 106, 104 105, 109 92" stroke="#dcdcda" stroke-width="1.2" fill="none"/>
<path d="M38 110 C42 100, 48 94, 54 88 C58 100, 64 112, 74 125 L38 125Z" fill="#4e4036"/>
<rect x="0" y="124" width="190" height="1" fill="#f2f2f2" opacity=".6"/></svg><div class="t" style="left:876px;top:382px;font-size:11px;line-height:11px;color:#3a3a3a;font-weight:400;">Buchungskreis:</div><div class="a" style="left:989px;top:377px;width:190px;height:20px;background:#f0f0f0;border:1px solid #a8a8a8;box-sizing:border-box"></div><div class="t" style="left:993px;top:382px;font-size:11px;line-height:11px;color:#3a3a3a;font-weight:400;">001 FCS</div><div class="t" style="left:876px;top:434px;font-size:11px;line-height:11px;color:#3a3a3a;font-weight:400;">Handy:</div><div class="a" style="left:989px;top:429px;width:190px;height:20px;background:#ffffff;border:1px solid #a8a8a8;box-sizing:border-box"></div><div class="t" style="left:993px;top:434px;font-size:11px;line-height:11px;color:#3a3a3a;font-weight:400;">0175 75654548X</div><div class="t" style="left:876px;top:460px;font-size:11px;line-height:11px;color:#3a3a3a;font-weight:400;">E-Mail:</div><div class="a" style="left:989px;top:455px;width:190px;height:20px;background:#ffffff;border:1px solid #a8a8a8;box-sizing:border-box"></div><div class="t" style="left:993px;top:460px;font-size:11px;line-height:11px;color:#3a3a3a;font-weight:400;">vertrieb@fair-computer.de</div><div class="t" style="left:876px;top:538px;font-size:11px;line-height:11px;color:#3a3a3a;font-weight:400;">Datum eingestellt:</div><div class="t" style="left:876px;top:564px;font-size:11px;line-height:11px;color:#3a3a3a;font-weight:400;">Datum ausgeschieden:</div><div class="t" style="left:876px;top:590px;font-size:11px;line-height:11px;color:#3a3a3a;font-weight:400;">ADL Letzter Abgleich:</div><div class="t" style="left:876px;top:616px;font-size:11px;line-height:11px;color:#3a3a3a;font-weight:400;">Deaktiviert (AD):</div><div class="t" style="left:876px;top:641px;font-size:11px;line-height:11px;color:#3a3a3a;font-weight:400;letter-spacing:-0.2px">Als Gruppe im Baum anlegen*</div><div class="a" style="left:1026px;top:533px;width:153px;height:20px;background:#fff;border:1px solid #a8a8a8;box-sizing:border-box"></div><div class="a" style="left:1162px;top:534px;width:1px;height:18px;background:#dcdcdc"></div><svg class="a" style="left:1165px;top:540px;" width="10" height="6" viewBox="0 0 10 6"><path d="M1 1 L9 1 L5 5Z" fill="#707070"/></svg><div class="a" style="left:1030px;top:536px;width:13px;height:13px;background:#fff;border:1px solid #8f8f8f;box-sizing:border-box"></div><svg class="a" style="left:1030px;top:536px;" width="13" height="13" viewBox="0 0 13 13"><path d="M2.5 6.5 L5.2 9.2 L10.5 3" stroke="#444" stroke-width="1.1" fill="none"/></svg><div class="t" style="left:1060px;width:99px;text-align:right;top:538px;font-size:11px;line-height:11px;color:#3a3a3a;letter-spacing:.3px">26.03.2015</div><div class="a" style="left:1026px;top:559px;width:153px;height:20px;background:#f0f0f0;border:1px solid #a8a8a8;box-sizing:border-box"></div><div class="a" style="left:1162px;top:560px;width:1px;height:18px;background:#dcdcdc"></div><svg class="a" style="left:1165px;top:566px;" width="10" height="6" viewBox="0 0 10 6"><path d="M1 1 L9 1 L5 5Z" fill="#707070"/></svg><div class="a" style="left:1030px;top:562px;width:13px;height:13px;background:#fff;border:1px solid #8f8f8f;box-sizing:border-box"></div><div class="t" style="left:1060px;width:99px;text-align:right;top:564px;font-size:11px;line-height:11px;color:#3a3a3a;letter-spacing:.3px">24.02.2021</div><div class="a" style="left:1026px;top:585px;width:153px;height:20px;background:#f0f0f0;border:1px solid #a8a8a8;box-sizing:border-box"></div><div class="t" style="left:1030px;top:590px;font-size:11px;line-height:11px;color:#3a3a3a;font-weight:400;">06.10.2020 16:26</div><div class="a" style="left:1027px;top:614px;width:13px;height:13px;background:#f3f3f3;border:1px solid #d6d6d6;box-sizing:border-box"></div><svg class="a" style="left:1027px;top:614px;" width="13" height="13" viewBox="0 0 13 13"><path d="M2.5 6.5 L5.2 9.2 L10.5 3" stroke="#c8c8c8" stroke-width="1.1" fill="none"/></svg><div class="a" style="left:1027px;top:639px;width:13px;height:13px;background:#fff;border:1px solid #8f8f8f;box-sizing:border-box"></div><svg class="a" style="left:1027px;top:639px;" width="13" height="13" viewBox="0 0 13 13"><path d="M2.5 6.5 L5.2 9.2 L10.5 3" stroke="#444" stroke-width="1.1" fill="none"/></svg><div class="a" style="left:541px;top:672px;width:638px;height:67px;border:1px solid #bdbdbd;box-sizing:border-box"></div><div class="a" style="left:547px;top:665px;width:47px;height:12px;background:#f0f0f0"></div><div class="t" style="left:552px;top:666px;font-size:11px;line-height:11px;color:#3a3a3a;font-weight:400;">Einkauf</div><div class="a" style="left:655px;top:688px;width:13px;height:13px;background:#fff;border:1px solid #8f8f8f;box-sizing:border-box"></div><div class="t" style="left:671.5px;top:689px;font-size:10.8px;line-height:10.8px;color:#3a3a3a;font-weight:400;">Super-Einkäufer (Einkäufergruppe bei Bestellung nicht beachten)</div><div class="t" style="left:545px;top:715px;font-size:11px;line-height:11px;color:#3a3a3a;font-weight:400;">Einkäufergruppe:</div><div class="a" style="left:654px;top:710px;width:473px;height:20px;background:#f0f0f0;border:1px solid #a8a8a8;box-sizing:border-box"></div><svg class="a" style="left:1131px;top:712px;" width="16" height="16" viewBox="0 0 16 16"><rect x="7" y="4.5" width="2" height="6" fill="#505050"/><rect x="0.5" y="7.5" width="6.5" height="7.5" rx="1" fill="#a8a8a8" stroke="#505050"/><rect x="1.5" y="3" width="5.5" height="4.5" rx=".5" fill="#a8a8a8" stroke="#505050"/><rect x="2" y="0" width="4.5" height="2.8" fill="#505050"/><rect x="9" y="7.5" width="6.5" height="7.5" rx="1" fill="#a8a8a8" stroke="#505050"/><rect x="9" y="3" width="5.5" height="4.5" rx=".5" fill="#a8a8a8" stroke="#505050"/><rect x="9.5" y="0" width="4.5" height="2.8" fill="#505050"/><path d="M2.5 4.6 H6 M10 4.6 H13.5 M1.5 9 H6 M10 9 H14.5 M1.5 12.6 H6 M10 12.6 H14.5" stroke="#eeeeee" stroke-width="1"/></svg><svg class="a" style="left:1154px;top:712px;" width="16" height="16" viewBox="0 0 16 16"><path d="M3.5 3.5 L12.5 12.5 M12.5 3.5 L3.5 12.5" stroke="#c2c2c2" stroke-width="5" stroke-linecap="round"/><path d="M3.5 3.5 L12.5 12.5 M12.5 3.5 L3.5 12.5" stroke="#d4d4d4" stroke-width="3.2" stroke-linecap="round"/></svg><div class="a" style="left:1064px;top:745px;width:115px;height:23px;background:#f0f0f0;border:1px solid #adadad;box-sizing:border-box"></div><div class="t" style="left:1064px;width:115px;text-align:center;top:751px;font-size:11px;line-height:11px;color:#3a3a3a">Speichern</div></body></html>
